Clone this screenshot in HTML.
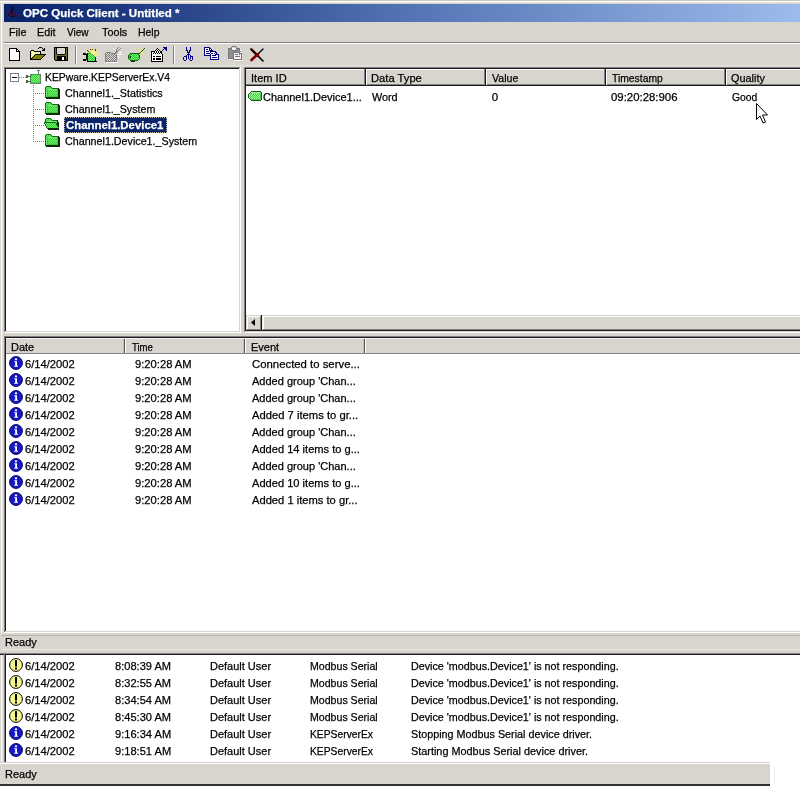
<!DOCTYPE html>
<html><head><meta charset="utf-8"><title>OPC Quick Client</title>
<style>
html,body{margin:0;padding:0}
body{width:800px;height:786px;overflow:hidden;position:relative;background:#d8d4ce;font-family:"Liberation Sans", sans-serif;font-size:11px}
.t{-webkit-text-stroke:0.25px currentColor;position:absolute;line-height:14px;white-space:pre;transform-origin:0 0}
</style></head><body>
<div style="position:absolute;left:0px;top:0px;width:800px;height:1px;background:#ccc8bc;"></div>
<div style="position:absolute;left:0px;top:1px;width:800px;height:1px;background:#fff;"></div>
<div style="position:absolute;left:1px;top:1px;width:1px;height:785px;background:#fff;"></div>
<div style="position:absolute;left:2px;top:2px;width:798px;height:1px;background:#e6e4e0;"></div>
<div style="position:absolute;left:2px;top:2px;width:1px;height:784px;background:#e0ddd8;"></div>
<div style="position:absolute;left:4px;top:4px;width:796px;height:18px;background:linear-gradient(to right,#0a246a 0%,#0c266e 3%,#5272b4 50%,#9cbcec 100%);"></div>
<div style="position:absolute;left:4px;top:42px;width:796px;height:1px;background:#808080;"></div>
<div style="position:absolute;left:4px;top:43px;width:796px;height:1px;background:#fff;"></div>
<div style="position:absolute;left:75px;top:46px;width:1px;height:18px;background:#808080;"></div>
<div style="position:absolute;left:76px;top:46px;width:1px;height:18px;background:#fff;"></div>
<div style="position:absolute;left:173px;top:46px;width:1px;height:18px;background:#808080;"></div>
<div style="position:absolute;left:174px;top:46px;width:1px;height:18px;background:#fff;"></div>
<div style="position:absolute;left:4px;top:65px;width:796px;height:1px;background:#e4e1db;"></div>
<div style="position:absolute;left:4px;top:66px;width:796px;height:1px;background:#dcd9d2;"></div>
<div style="position:absolute;left:4px;top:67px;width:237px;height:266px;background:#fff;"></div>
<div style="position:absolute;left:4px;top:67px;width:237px;height:1px;background:#808080;"></div>
<div style="position:absolute;left:4px;top:67px;width:1px;height:266px;background:#808080;"></div>
<div style="position:absolute;left:5px;top:68px;width:235px;height:1px;background:#1c1c1c;"></div>
<div style="position:absolute;left:5px;top:68px;width:1px;height:264px;background:#1c1c1c;"></div>
<div style="position:absolute;left:5px;top:331px;width:235px;height:1px;background:#d8d4ce;"></div>
<div style="position:absolute;left:239px;top:68px;width:1px;height:264px;background:#d8d4ce;"></div>
<div style="position:absolute;left:4px;top:332px;width:237px;height:1px;background:#fff;"></div>
<div style="position:absolute;left:240px;top:67px;width:1px;height:266px;background:#fff;"></div>
<div style="position:absolute;left:244px;top:67px;width:600px;height:266px;background:#fff;"></div>
<div style="position:absolute;left:244px;top:67px;width:600px;height:1px;background:#808080;"></div>
<div style="position:absolute;left:244px;top:67px;width:1px;height:266px;background:#808080;"></div>
<div style="position:absolute;left:245px;top:68px;width:598px;height:1px;background:#1c1c1c;"></div>
<div style="position:absolute;left:245px;top:68px;width:1px;height:264px;background:#1c1c1c;"></div>
<div style="position:absolute;left:245px;top:331px;width:598px;height:1px;background:#d8d4ce;"></div>
<div style="position:absolute;left:842px;top:68px;width:1px;height:264px;background:#d8d4ce;"></div>
<div style="position:absolute;left:244px;top:332px;width:600px;height:1px;background:#fff;"></div>
<div style="position:absolute;left:843px;top:67px;width:1px;height:266px;background:#fff;"></div>
<div style="position:absolute;left:4px;top:336px;width:840px;height:297px;background:#fff;"></div>
<div style="position:absolute;left:4px;top:336px;width:840px;height:1px;background:#808080;"></div>
<div style="position:absolute;left:4px;top:336px;width:1px;height:297px;background:#808080;"></div>
<div style="position:absolute;left:5px;top:337px;width:838px;height:1px;background:#1c1c1c;"></div>
<div style="position:absolute;left:5px;top:337px;width:1px;height:295px;background:#1c1c1c;"></div>
<div style="position:absolute;left:5px;top:631px;width:838px;height:1px;background:#d8d4ce;"></div>
<div style="position:absolute;left:842px;top:337px;width:1px;height:295px;background:#d8d4ce;"></div>
<div style="position:absolute;left:4px;top:632px;width:840px;height:1px;background:#fff;"></div>
<div style="position:absolute;left:843px;top:336px;width:1px;height:297px;background:#fff;"></div>
<div style="position:absolute;left:246px;top:69px;width:560px;height:17px;background:#d8d4ce;"></div>
<div style="position:absolute;left:246px;top:69px;width:560px;height:1px;background:#fff;"></div>
<div style="position:absolute;left:246px;top:85px;width:560px;height:1px;background:#1c1c1c;"></div>
<div style="position:absolute;left:246px;top:84px;width:560px;height:1px;background:#808080;"></div>
<div style="position:absolute;left:364px;top:69px;width:1px;height:16px;background:#808080;"></div>
<div style="position:absolute;left:365px;top:69px;width:1px;height:17px;background:#1c1c1c;"></div>
<div style="position:absolute;left:366px;top:69px;width:1px;height:16px;background:#fff;"></div>
<div style="position:absolute;left:484px;top:69px;width:1px;height:16px;background:#808080;"></div>
<div style="position:absolute;left:485px;top:69px;width:1px;height:17px;background:#1c1c1c;"></div>
<div style="position:absolute;left:486px;top:69px;width:1px;height:16px;background:#fff;"></div>
<div style="position:absolute;left:604px;top:69px;width:1px;height:16px;background:#808080;"></div>
<div style="position:absolute;left:605px;top:69px;width:1px;height:17px;background:#1c1c1c;"></div>
<div style="position:absolute;left:606px;top:69px;width:1px;height:16px;background:#fff;"></div>
<div style="position:absolute;left:724px;top:69px;width:1px;height:16px;background:#808080;"></div>
<div style="position:absolute;left:725px;top:69px;width:1px;height:17px;background:#1c1c1c;"></div>
<div style="position:absolute;left:726px;top:69px;width:1px;height:16px;background:#fff;"></div>
<div style="position:absolute;left:6px;top:338px;width:820px;height:16px;background:#d8d4ce;"></div>
<div style="position:absolute;left:6px;top:338px;width:820px;height:1px;background:#f4f2ee;"></div>
<div style="position:absolute;left:6px;top:353px;width:820px;height:1px;background:#858585;"></div>
<div style="position:absolute;left:123px;top:339px;width:1px;height:14px;background:#c4c0b8;"></div>
<div style="position:absolute;left:124px;top:339px;width:1px;height:14px;background:#585858;"></div>
<div style="position:absolute;left:125px;top:339px;width:1px;height:14px;background:#fff;"></div>
<div style="position:absolute;left:243px;top:339px;width:1px;height:14px;background:#c4c0b8;"></div>
<div style="position:absolute;left:244px;top:339px;width:1px;height:14px;background:#585858;"></div>
<div style="position:absolute;left:245px;top:339px;width:1px;height:14px;background:#fff;"></div>
<div style="position:absolute;left:363px;top:339px;width:1px;height:14px;background:#c4c0b8;"></div>
<div style="position:absolute;left:364px;top:339px;width:1px;height:14px;background:#585858;"></div>
<div style="position:absolute;left:365px;top:339px;width:1px;height:14px;background:#fff;"></div>
<div style="position:absolute;left:246px;top:315px;width:560px;height:16px;background:#d8d4ce;"></div>
<div style="position:absolute;left:246px;top:315px;width:560px;height:1px;background:#d0d0c8;"></div>
<div style="position:absolute;left:246px;top:316px;width:560px;height:1px;background:#fff;"></div>
<div style="position:absolute;left:246px;top:329px;width:560px;height:1px;background:#808080;"></div>
<div style="position:absolute;left:246px;top:330px;width:560px;height:1px;background:#1c1c1c;"></div>
<div style="position:absolute;left:246px;top:315px;width:1px;height:15px;background:#d8d4ce;"></div>
<div style="position:absolute;left:247px;top:316px;width:1px;height:13px;background:#fff;"></div>
<div style="position:absolute;left:261px;top:315px;width:1px;height:16px;background:#1c1c1c;"></div>
<div style="position:absolute;left:260px;top:316px;width:1px;height:14px;background:#808080;"></div>
<div style="position:absolute;left:262px;top:315px;width:1px;height:15px;background:#e8e6e2;"></div>
<div style="position:absolute;left:263px;top:316px;width:1px;height:13px;background:#fff;"></div>
<svg style="position:absolute;left:251px;top:319px" width="4" height="7" viewBox="0 0 4 7"><path d="M4 0 L4 7 L0 3.5 Z" fill="#000"/></svg>
<div style="position:absolute;left:0px;top:633px;width:800px;height:21px;background:#d8d4ce;"></div>
<div style="position:absolute;left:2px;top:635px;width:800px;height:1px;background:#b8b4ac;"></div>
<div style="position:absolute;left:2px;top:649px;width:800px;height:1px;background:#ece9e4;"></div>
<div style="position:absolute;left:0px;top:653px;width:800px;height:1px;background:#808080;"></div>
<div style="position:absolute;left:0px;top:654px;width:800px;height:1px;background:#202020;"></div>
<div style="position:absolute;left:4px;top:655px;width:800px;height:107px;background:#fff;"></div>
<div style="position:absolute;left:4px;top:654px;width:1px;height:108px;background:#808080;"></div>
<div style="position:absolute;left:5px;top:654px;width:1px;height:108px;background:#202020;"></div>
<div style="position:absolute;left:0px;top:762px;width:770px;height:1px;background:#d2d0c8;"></div>
<div style="position:absolute;left:770px;top:762px;width:40px;height:30px;background:#fff;"></div>
<div style="position:absolute;left:0px;top:763px;width:770px;height:21px;background:#d8d4ce;"></div>
<div style="position:absolute;left:0px;top:763px;width:770px;height:1px;background:#fff;"></div>
<div style="position:absolute;left:0px;top:784px;width:770px;height:2px;background:#303030;"></div>
<div style="position:absolute;left:774px;top:767px;width:1px;height:17px;background:#f0f0f0;"></div>
<div style="position:absolute;left:64px;top:117px;width:103px;height:16px;background:#0a246a;outline:1px dotted #c8b890;outline-offset:-1px"></div>
<div style="position:absolute;left:33px;top:85px;width:1px;height:57px;background:repeating-linear-gradient(to bottom,#808080 0,#808080 1px,transparent 1px,transparent 2px);"></div>
<div style="position:absolute;left:33px;top:93px;width:12px;height:1px;background:repeating-linear-gradient(to right,#808080 0,#808080 1px,transparent 1px,transparent 2px);"></div>
<div style="position:absolute;left:33px;top:109px;width:12px;height:1px;background:repeating-linear-gradient(to right,#808080 0,#808080 1px,transparent 1px,transparent 2px);"></div>
<div style="position:absolute;left:33px;top:125px;width:12px;height:1px;background:repeating-linear-gradient(to right,#808080 0,#808080 1px,transparent 1px,transparent 2px);"></div>
<div style="position:absolute;left:33px;top:141px;width:12px;height:1px;background:repeating-linear-gradient(to right,#808080 0,#808080 1px,transparent 1px,transparent 2px);"></div>
<div style="position:absolute;left:19px;top:77px;width:7px;height:1px;background:repeating-linear-gradient(to right,#808080 0,#808080 1px,transparent 1px,transparent 2px);"></div>
<svg style="position:absolute;left:9px;top:48px" width="11" height="13" viewBox="0 0 11 13" shape-rendering="crispEdges"><rect x="0" y="0" width="8" height="1" fill="#000"/><rect x="0" y="1" width="1" height="1" fill="#000"/><rect x="1" y="1" width="6" height="1" fill="#fff"/><rect x="7" y="1" width="2" height="1" fill="#000"/><rect x="0" y="2" width="1" height="1" fill="#000"/><rect x="1" y="2" width="6" height="1" fill="#fff"/><rect x="7" y="2" width="1" height="1" fill="#000"/><rect x="8" y="2" width="1" height="1" fill="#fff"/><rect x="9" y="2" width="1" height="1" fill="#000"/><rect x="0" y="3" width="1" height="1" fill="#000"/><rect x="1" y="3" width="6" height="1" fill="#fff"/><rect x="7" y="3" width="4" height="1" fill="#000"/><rect x="0" y="4" width="1" height="1" fill="#000"/><rect x="1" y="4" width="9" height="1" fill="#fff"/><rect x="10" y="4" width="1" height="1" fill="#000"/><rect x="0" y="5" width="1" height="1" fill="#000"/><rect x="1" y="5" width="9" height="1" fill="#fff"/><rect x="10" y="5" width="1" height="1" fill="#000"/><rect x="0" y="6" width="1" height="1" fill="#000"/><rect x="1" y="6" width="9" height="1" fill="#fff"/><rect x="10" y="6" width="1" height="1" fill="#000"/><rect x="0" y="7" width="1" height="1" fill="#000"/><rect x="1" y="7" width="9" height="1" fill="#fff"/><rect x="10" y="7" width="1" height="1" fill="#000"/><rect x="0" y="8" width="1" height="1" fill="#000"/><rect x="1" y="8" width="9" height="1" fill="#fff"/><rect x="10" y="8" width="1" height="1" fill="#000"/><rect x="0" y="9" width="1" height="1" fill="#000"/><rect x="1" y="9" width="9" height="1" fill="#fff"/><rect x="10" y="9" width="1" height="1" fill="#000"/><rect x="0" y="10" width="1" height="1" fill="#000"/><rect x="1" y="10" width="9" height="1" fill="#fff"/><rect x="10" y="10" width="1" height="1" fill="#000"/><rect x="0" y="11" width="1" height="1" fill="#000"/><rect x="1" y="11" width="9" height="1" fill="#fff"/><rect x="10" y="11" width="1" height="1" fill="#000"/><rect x="0" y="12" width="11" height="1" fill="#000"/></svg><svg style="position:absolute;left:30px;top:47px" width="16" height="13" viewBox="0 0 16 13" shape-rendering="crispEdges"><rect x="9" y="0" width="3" height="1" fill="#000"/><rect x="8" y="1" width="1" height="1" fill="#000"/><rect x="12" y="1" width="1" height="1" fill="#000"/><rect x="14" y="1" width="1" height="1" fill="#000"/><rect x="13" y="2" width="2" height="1" fill="#000"/><rect x="1" y="3" width="3" height="1" fill="#000"/><rect x="12" y="3" width="3" height="1" fill="#000"/><rect x="0" y="4" width="1" height="1" fill="#000"/><rect x="1" y="4" width="1" height="1" fill="#f4f080"/><rect x="2" y="4" width="1" height="1" fill="#fffff0"/><rect x="3" y="4" width="1" height="1" fill="#f4f080"/><rect x="4" y="4" width="7" height="1" fill="#000"/><rect x="0" y="5" width="1" height="1" fill="#000"/><rect x="1" y="5" width="1" height="1" fill="#fffff0"/><rect x="2" y="5" width="1" height="1" fill="#f4f080"/><rect x="3" y="5" width="1" height="1" fill="#fffff0"/><rect x="4" y="5" width="1" height="1" fill="#f4f080"/><rect x="5" y="5" width="1" height="1" fill="#fffff0"/><rect x="6" y="5" width="1" height="1" fill="#f4f080"/><rect x="7" y="5" width="1" height="1" fill="#fffff0"/><rect x="8" y="5" width="1" height="1" fill="#f4f080"/><rect x="9" y="5" width="1" height="1" fill="#fffff0"/><rect x="10" y="5" width="1" height="1" fill="#000"/><rect x="0" y="6" width="1" height="1" fill="#000"/><rect x="1" y="6" width="1" height="1" fill="#f4f080"/><rect x="2" y="6" width="1" height="1" fill="#fffff0"/><rect x="3" y="6" width="1" height="1" fill="#f4f080"/><rect x="4" y="6" width="1" height="1" fill="#fffff0"/><rect x="5" y="6" width="1" height="1" fill="#f4f080"/><rect x="6" y="6" width="1" height="1" fill="#fffff0"/><rect x="7" y="6" width="1" height="1" fill="#f4f080"/><rect x="8" y="6" width="1" height="1" fill="#fffff0"/><rect x="9" y="6" width="1" height="1" fill="#f4f080"/><rect x="10" y="6" width="1" height="1" fill="#000"/><rect x="0" y="7" width="1" height="1" fill="#000"/><rect x="1" y="7" width="1" height="1" fill="#fffff0"/><rect x="2" y="7" width="1" height="1" fill="#f4f080"/><rect x="3" y="7" width="1" height="1" fill="#fffff0"/><rect x="4" y="7" width="1" height="1" fill="#f4f080"/><rect x="5" y="7" width="11" height="1" fill="#000"/><rect x="0" y="8" width="1" height="1" fill="#000"/><rect x="1" y="8" width="1" height="1" fill="#f4f080"/><rect x="2" y="8" width="1" height="1" fill="#fffff0"/><rect x="3" y="8" width="1" height="1" fill="#f4f080"/><rect x="4" y="8" width="1" height="1" fill="#000"/><rect x="5" y="8" width="9" height="1" fill="#808000"/><rect x="14" y="8" width="1" height="1" fill="#000"/><rect x="0" y="9" width="1" height="1" fill="#000"/><rect x="1" y="9" width="1" height="1" fill="#fffff0"/><rect x="2" y="9" width="1" height="1" fill="#f4f080"/><rect x="3" y="9" width="1" height="1" fill="#000"/><rect x="4" y="9" width="9" height="1" fill="#808000"/><rect x="13" y="9" width="1" height="1" fill="#000"/><rect x="0" y="10" width="1" height="1" fill="#000"/><rect x="1" y="10" width="1" height="1" fill="#f4f080"/><rect x="2" y="10" width="1" height="1" fill="#000"/><rect x="3" y="10" width="9" height="1" fill="#808000"/><rect x="12" y="10" width="1" height="1" fill="#000"/><rect x="0" y="11" width="2" height="1" fill="#000"/><rect x="2" y="11" width="9" height="1" fill="#808000"/><rect x="11" y="11" width="1" height="1" fill="#000"/><rect x="0" y="12" width="11" height="1" fill="#000"/></svg><svg style="position:absolute;left:54px;top:47px" width="14" height="14" viewBox="0 0 14 14" shape-rendering="crispEdges"><rect x="0" y="0" width="14" height="1" fill="#000"/><rect x="0" y="1" width="1" height="1" fill="#000"/><rect x="1" y="1" width="1" height="1" fill="#707030"/><rect x="2" y="1" width="1" height="1" fill="#000"/><rect x="3" y="1" width="8" height="1" fill="#d8d8d0"/><rect x="11" y="1" width="1" height="1" fill="#000"/><rect x="12" y="1" width="1" height="1" fill="#707030"/><rect x="13" y="1" width="1" height="1" fill="#000"/><rect x="0" y="2" width="1" height="1" fill="#000"/><rect x="1" y="2" width="1" height="1" fill="#707030"/><rect x="2" y="2" width="1" height="1" fill="#000"/><rect x="3" y="2" width="8" height="1" fill="#d8d8d0"/><rect x="11" y="2" width="1" height="1" fill="#000"/><rect x="12" y="2" width="1" height="1" fill="#707030"/><rect x="13" y="2" width="1" height="1" fill="#000"/><rect x="0" y="3" width="1" height="1" fill="#000"/><rect x="1" y="3" width="1" height="1" fill="#707030"/><rect x="2" y="3" width="1" height="1" fill="#000"/><rect x="3" y="3" width="8" height="1" fill="#d8d8d0"/><rect x="11" y="3" width="1" height="1" fill="#000"/><rect x="12" y="3" width="1" height="1" fill="#707030"/><rect x="13" y="3" width="1" height="1" fill="#000"/><rect x="0" y="4" width="1" height="1" fill="#000"/><rect x="1" y="4" width="1" height="1" fill="#707030"/><rect x="2" y="4" width="1" height="1" fill="#000"/><rect x="3" y="4" width="8" height="1" fill="#d8d8d0"/><rect x="11" y="4" width="1" height="1" fill="#000"/><rect x="12" y="4" width="1" height="1" fill="#707030"/><rect x="13" y="4" width="1" height="1" fill="#000"/><rect x="0" y="5" width="1" height="1" fill="#000"/><rect x="1" y="5" width="1" height="1" fill="#707030"/><rect x="2" y="5" width="1" height="1" fill="#000"/><rect x="3" y="5" width="8" height="1" fill="#d8d8d0"/><rect x="11" y="5" width="1" height="1" fill="#000"/><rect x="12" y="5" width="1" height="1" fill="#707030"/><rect x="13" y="5" width="1" height="1" fill="#000"/><rect x="0" y="6" width="1" height="1" fill="#000"/><rect x="1" y="6" width="1" height="1" fill="#707030"/><rect x="2" y="6" width="1" height="1" fill="#000"/><rect x="3" y="6" width="8" height="1" fill="#d8d8d0"/><rect x="11" y="6" width="1" height="1" fill="#000"/><rect x="12" y="6" width="1" height="1" fill="#707030"/><rect x="13" y="6" width="1" height="1" fill="#000"/><rect x="0" y="7" width="1" height="1" fill="#000"/><rect x="1" y="7" width="2" height="1" fill="#707030"/><rect x="3" y="7" width="8" height="1" fill="#000"/><rect x="11" y="7" width="2" height="1" fill="#707030"/><rect x="13" y="7" width="1" height="1" fill="#000"/><rect x="0" y="8" width="1" height="1" fill="#000"/><rect x="1" y="8" width="12" height="1" fill="#707030"/><rect x="13" y="8" width="1" height="1" fill="#000"/><rect x="0" y="9" width="1" height="1" fill="#000"/><rect x="1" y="9" width="2" height="1" fill="#707030"/><rect x="3" y="9" width="9" height="1" fill="#000"/><rect x="12" y="9" width="1" height="1" fill="#707030"/><rect x="13" y="9" width="1" height="1" fill="#000"/><rect x="0" y="10" width="1" height="1" fill="#000"/><rect x="1" y="10" width="2" height="1" fill="#707030"/><rect x="3" y="10" width="5" height="1" fill="#000"/><rect x="8" y="10" width="2" height="1" fill="#fff"/><rect x="10" y="10" width="2" height="1" fill="#000"/><rect x="12" y="10" width="1" height="1" fill="#707030"/><rect x="13" y="10" width="1" height="1" fill="#000"/><rect x="0" y="11" width="1" height="1" fill="#000"/><rect x="1" y="11" width="2" height="1" fill="#707030"/><rect x="3" y="11" width="5" height="1" fill="#000"/><rect x="8" y="11" width="2" height="1" fill="#fff"/><rect x="10" y="11" width="2" height="1" fill="#000"/><rect x="12" y="11" width="1" height="1" fill="#707030"/><rect x="13" y="11" width="1" height="1" fill="#000"/><rect x="0" y="12" width="1" height="1" fill="#000"/><rect x="1" y="12" width="2" height="1" fill="#707030"/><rect x="3" y="12" width="5" height="1" fill="#000"/><rect x="8" y="12" width="2" height="1" fill="#fff"/><rect x="10" y="12" width="2" height="1" fill="#000"/><rect x="12" y="12" width="1" height="1" fill="#707030"/><rect x="13" y="12" width="1" height="1" fill="#000"/><rect x="1" y="13" width="13" height="1" fill="#000"/></svg><svg style="position:absolute;left:82px;top:47px" width="18" height="16" viewBox="0 0 18 16" shape-rendering="crispEdges"><rect x="7" y="1" width="1" height="1" fill="#f4ec80"/><rect x="10" y="1" width="1" height="1" fill="#f4ec80"/><rect x="14" y="1" width="1" height="1" fill="#f4ec80"/><rect x="4" y="2" width="1" height="1" fill="#f4ec80"/><rect x="8" y="2" width="1" height="1" fill="#504000"/><rect x="10" y="2" width="1" height="1" fill="#504000"/><rect x="13" y="2" width="1" height="1" fill="#504000"/><rect x="5" y="3" width="1" height="1" fill="#504000"/><rect x="8" y="3" width="4" height="1" fill="#f4ec80"/><rect x="13" y="3" width="1" height="1" fill="#504000"/><rect x="6" y="4" width="1" height="1" fill="#504000"/><rect x="7" y="4" width="6" height="1" fill="#f4ec80"/><rect x="14" y="4" width="4" height="1" fill="#f4ec80"/><rect x="7" y="5" width="1" height="1" fill="#20c820"/><rect x="8" y="5" width="2" height="1" fill="#f4ec80"/><rect x="10" y="5" width="2" height="1" fill="#ffffd0"/><rect x="12" y="5" width="2" height="1" fill="#f4ec80"/><rect x="1" y="6" width="3" height="1" fill="#000"/><rect x="5" y="6" width="1" height="1" fill="#000"/><rect x="6" y="6" width="3" height="1" fill="#20c820"/><rect x="9" y="6" width="1" height="1" fill="#f4ec80"/><rect x="10" y="6" width="2" height="1" fill="#ffffd0"/><rect x="12" y="6" width="6" height="1" fill="#f4ec80"/><rect x="1" y="7" width="5" height="1" fill="#000"/><rect x="6" y="7" width="1" height="1" fill="#20c820"/><rect x="7" y="7" width="1" height="1" fill="#90f090"/><rect x="8" y="7" width="1" height="1" fill="#20c820"/><rect x="9" y="7" width="1" height="1" fill="#90f090"/><rect x="10" y="7" width="1" height="1" fill="#20c820"/><rect x="11" y="7" width="3" height="1" fill="#f4ec80"/><rect x="4" y="8" width="2" height="1" fill="#000"/><rect x="6" y="8" width="1" height="1" fill="#90f090"/><rect x="7" y="8" width="1" height="1" fill="#20c820"/><rect x="8" y="8" width="1" height="1" fill="#90f090"/><rect x="9" y="8" width="1" height="1" fill="#20c820"/><rect x="10" y="8" width="1" height="1" fill="#90f090"/><rect x="11" y="8" width="1" height="1" fill="#20c820"/><rect x="12" y="8" width="6" height="1" fill="#f4ec80"/><rect x="4" y="9" width="2" height="1" fill="#000"/><rect x="6" y="9" width="1" height="1" fill="#20c820"/><rect x="7" y="9" width="1" height="1" fill="#90f090"/><rect x="8" y="9" width="1" height="1" fill="#20c820"/><rect x="9" y="9" width="1" height="1" fill="#90f090"/><rect x="10" y="9" width="1" height="1" fill="#20c820"/><rect x="11" y="9" width="1" height="1" fill="#90f090"/><rect x="12" y="9" width="1" height="1" fill="#20c820"/><rect x="13" y="9" width="1" height="1" fill="#f4ec80"/><rect x="4" y="10" width="2" height="1" fill="#000"/><rect x="6" y="10" width="1" height="1" fill="#90f090"/><rect x="7" y="10" width="1" height="1" fill="#20c820"/><rect x="8" y="10" width="1" height="1" fill="#90f090"/><rect x="9" y="10" width="1" height="1" fill="#20c820"/><rect x="10" y="10" width="1" height="1" fill="#90f090"/><rect x="11" y="10" width="1" height="1" fill="#20c820"/><rect x="12" y="10" width="1" height="1" fill="#90f090"/><rect x="13" y="10" width="1" height="1" fill="#000"/><rect x="4" y="11" width="2" height="1" fill="#000"/><rect x="6" y="11" width="1" height="1" fill="#20c820"/><rect x="7" y="11" width="1" height="1" fill="#90f090"/><rect x="8" y="11" width="1" height="1" fill="#20c820"/><rect x="9" y="11" width="1" height="1" fill="#90f090"/><rect x="10" y="11" width="1" height="1" fill="#20c820"/><rect x="11" y="11" width="1" height="1" fill="#90f090"/><rect x="12" y="11" width="1" height="1" fill="#20c820"/><rect x="13" y="11" width="1" height="1" fill="#000"/><rect x="1" y="12" width="5" height="1" fill="#000"/><rect x="6" y="12" width="1" height="1" fill="#90f090"/><rect x="7" y="12" width="1" height="1" fill="#20c820"/><rect x="8" y="12" width="1" height="1" fill="#90f090"/><rect x="9" y="12" width="1" height="1" fill="#20c820"/><rect x="10" y="12" width="1" height="1" fill="#90f090"/><rect x="11" y="12" width="1" height="1" fill="#20c820"/><rect x="12" y="12" width="1" height="1" fill="#90f090"/><rect x="13" y="12" width="1" height="1" fill="#000"/><rect x="1" y="13" width="3" height="1" fill="#000"/><rect x="5" y="13" width="1" height="1" fill="#000"/><rect x="6" y="13" width="1" height="1" fill="#20c820"/><rect x="7" y="13" width="1" height="1" fill="#90f090"/><rect x="8" y="13" width="1" height="1" fill="#20c820"/><rect x="9" y="13" width="1" height="1" fill="#90f090"/><rect x="10" y="13" width="1" height="1" fill="#20c820"/><rect x="11" y="13" width="1" height="1" fill="#90f090"/><rect x="12" y="13" width="1" height="1" fill="#20c820"/><rect x="13" y="13" width="1" height="1" fill="#000"/><rect x="5" y="14" width="10" height="1" fill="#000"/></svg><svg style="position:absolute;left:104px;top:47px" width="18" height="16" viewBox="0 0 18 16" shape-rendering="crispEdges"><rect x="14" y="0" width="1" height="1" fill="#808080"/><rect x="9" y="1" width="1" height="1" fill="#fff"/><rect x="13" y="1" width="1" height="1" fill="#808080"/><rect x="16" y="1" width="1" height="1" fill="#808080"/><rect x="10" y="2" width="1" height="1" fill="#fff"/><rect x="12" y="2" width="1" height="1" fill="#808080"/><rect x="15" y="2" width="1" height="1" fill="#808080"/><rect x="11" y="3" width="1" height="1" fill="#fff"/><rect x="12" y="3" width="1" height="1" fill="#808080"/><rect x="14" y="3" width="1" height="1" fill="#808080"/><rect x="12" y="4" width="2" height="1" fill="#808080"/><rect x="2" y="5" width="5" height="1" fill="#808080"/><rect x="11" y="5" width="3" height="1" fill="#808080"/><rect x="14" y="5" width="4" height="1" fill="#fff"/><rect x="1" y="6" width="1" height="1" fill="#808080"/><rect x="3" y="6" width="1" height="1" fill="#808080"/><rect x="5" y="6" width="1" height="1" fill="#808080"/><rect x="7" y="6" width="5" height="1" fill="#808080"/><rect x="1" y="7" width="2" height="1" fill="#808080"/><rect x="4" y="7" width="1" height="1" fill="#808080"/><rect x="6" y="7" width="1" height="1" fill="#808080"/><rect x="8" y="7" width="1" height="1" fill="#808080"/><rect x="10" y="7" width="1" height="1" fill="#808080"/><rect x="12" y="7" width="1" height="1" fill="#808080"/><rect x="13" y="7" width="5" height="1" fill="#fff"/><rect x="1" y="8" width="1" height="1" fill="#808080"/><rect x="3" y="8" width="1" height="1" fill="#808080"/><rect x="5" y="8" width="1" height="1" fill="#808080"/><rect x="7" y="8" width="1" height="1" fill="#808080"/><rect x="9" y="8" width="1" height="1" fill="#808080"/><rect x="11" y="8" width="2" height="1" fill="#808080"/><rect x="1" y="9" width="2" height="1" fill="#808080"/><rect x="4" y="9" width="1" height="1" fill="#808080"/><rect x="6" y="9" width="1" height="1" fill="#808080"/><rect x="8" y="9" width="1" height="1" fill="#808080"/><rect x="10" y="9" width="1" height="1" fill="#808080"/><rect x="12" y="9" width="1" height="1" fill="#808080"/><rect x="14" y="9" width="1" height="1" fill="#fff"/><rect x="1" y="10" width="1" height="1" fill="#808080"/><rect x="3" y="10" width="1" height="1" fill="#808080"/><rect x="5" y="10" width="1" height="1" fill="#808080"/><rect x="7" y="10" width="1" height="1" fill="#808080"/><rect x="9" y="10" width="1" height="1" fill="#808080"/><rect x="11" y="10" width="2" height="1" fill="#808080"/><rect x="15" y="10" width="1" height="1" fill="#fff"/><rect x="1" y="11" width="2" height="1" fill="#808080"/><rect x="4" y="11" width="1" height="1" fill="#808080"/><rect x="6" y="11" width="1" height="1" fill="#808080"/><rect x="8" y="11" width="1" height="1" fill="#808080"/><rect x="10" y="11" width="1" height="1" fill="#808080"/><rect x="12" y="11" width="1" height="1" fill="#808080"/><rect x="1" y="12" width="1" height="1" fill="#808080"/><rect x="3" y="12" width="1" height="1" fill="#808080"/><rect x="5" y="12" width="1" height="1" fill="#808080"/><rect x="7" y="12" width="1" height="1" fill="#808080"/><rect x="9" y="12" width="1" height="1" fill="#808080"/><rect x="11" y="12" width="2" height="1" fill="#808080"/><rect x="1" y="13" width="2" height="1" fill="#808080"/><rect x="4" y="13" width="1" height="1" fill="#808080"/><rect x="6" y="13" width="1" height="1" fill="#808080"/><rect x="8" y="13" width="1" height="1" fill="#808080"/><rect x="10" y="13" width="1" height="1" fill="#808080"/><rect x="12" y="13" width="1" height="1" fill="#808080"/><rect x="1" y="14" width="12" height="1" fill="#808080"/><rect x="13" y="14" width="1" height="1" fill="#fff"/><rect x="2" y="15" width="12" height="1" fill="#fff"/></svg><svg style="position:absolute;left:128px;top:48px" width="18" height="14" viewBox="0 0 18 14" shape-rendering="crispEdges"><rect x="10" y="0" width="1" height="1" fill="#f0e060"/><rect x="15" y="0" width="1" height="1" fill="#f0e060"/><rect x="16" y="0" width="1" height="1" fill="#106010"/><rect x="11" y="1" width="1" height="1" fill="#f0e060"/><rect x="14" y="1" width="1" height="1" fill="#f0e060"/><rect x="15" y="1" width="1" height="1" fill="#106010"/><rect x="12" y="2" width="2" height="1" fill="#f0e060"/><rect x="14" y="2" width="1" height="1" fill="#106010"/><rect x="13" y="3" width="1" height="1" fill="#106010"/><rect x="12" y="4" width="1" height="1" fill="#106010"/><rect x="13" y="4" width="1" height="1" fill="#ffffc0"/><rect x="14" y="4" width="4" height="1" fill="#f0e060"/><rect x="2" y="5" width="10" height="1" fill="#106010"/><rect x="12" y="5" width="2" height="1" fill="#f0e060"/><rect x="1" y="6" width="1" height="1" fill="#106010"/><rect x="2" y="6" width="2" height="1" fill="#30d030"/><rect x="4" y="6" width="1" height="1" fill="#70f070"/><rect x="5" y="6" width="1" height="1" fill="#30d030"/><rect x="6" y="6" width="1" height="1" fill="#70f070"/><rect x="7" y="6" width="1" height="1" fill="#30d030"/><rect x="8" y="6" width="1" height="1" fill="#70f070"/><rect x="9" y="6" width="1" height="1" fill="#30d030"/><rect x="10" y="6" width="1" height="1" fill="#106010"/><rect x="11" y="6" width="1" height="1" fill="#f0e060"/><rect x="14" y="6" width="1" height="1" fill="#f0e060"/><rect x="0" y="7" width="1" height="1" fill="#106010"/><rect x="1" y="7" width="2" height="1" fill="#30d030"/><rect x="3" y="7" width="1" height="1" fill="#70f070"/><rect x="4" y="7" width="1" height="1" fill="#30d030"/><rect x="5" y="7" width="1" height="1" fill="#70f070"/><rect x="6" y="7" width="1" height="1" fill="#30d030"/><rect x="7" y="7" width="1" height="1" fill="#70f070"/><rect x="8" y="7" width="1" height="1" fill="#30d030"/><rect x="9" y="7" width="1" height="1" fill="#70f070"/><rect x="10" y="7" width="1" height="1" fill="#30d030"/><rect x="11" y="7" width="1" height="1" fill="#106010"/><rect x="15" y="7" width="1" height="1" fill="#f0e060"/><rect x="0" y="8" width="1" height="1" fill="#106010"/><rect x="1" y="8" width="1" height="1" fill="#30d030"/><rect x="2" y="8" width="1" height="1" fill="#003000"/><rect x="3" y="8" width="1" height="1" fill="#30d030"/><rect x="4" y="8" width="1" height="1" fill="#70f070"/><rect x="5" y="8" width="1" height="1" fill="#30d030"/><rect x="6" y="8" width="1" height="1" fill="#70f070"/><rect x="7" y="8" width="1" height="1" fill="#30d030"/><rect x="8" y="8" width="1" height="1" fill="#70f070"/><rect x="9" y="8" width="1" height="1" fill="#30d030"/><rect x="10" y="8" width="1" height="1" fill="#70f070"/><rect x="11" y="8" width="1" height="1" fill="#106010"/><rect x="0" y="9" width="1" height="1" fill="#106010"/><rect x="1" y="9" width="1" height="1" fill="#30d030"/><rect x="2" y="9" width="1" height="1" fill="#003000"/><rect x="3" y="9" width="1" height="1" fill="#70f070"/><rect x="4" y="9" width="1" height="1" fill="#30d030"/><rect x="5" y="9" width="1" height="1" fill="#70f070"/><rect x="6" y="9" width="1" height="1" fill="#30d030"/><rect x="7" y="9" width="1" height="1" fill="#70f070"/><rect x="8" y="9" width="1" height="1" fill="#30d030"/><rect x="9" y="9" width="1" height="1" fill="#70f070"/><rect x="10" y="9" width="1" height="1" fill="#30d030"/><rect x="11" y="9" width="1" height="1" fill="#106010"/><rect x="0" y="10" width="1" height="1" fill="#106010"/><rect x="1" y="10" width="3" height="1" fill="#30d030"/><rect x="4" y="10" width="1" height="1" fill="#70f070"/><rect x="5" y="10" width="1" height="1" fill="#30d030"/><rect x="6" y="10" width="1" height="1" fill="#70f070"/><rect x="7" y="10" width="1" height="1" fill="#30d030"/><rect x="8" y="10" width="1" height="1" fill="#70f070"/><rect x="9" y="10" width="1" height="1" fill="#30d030"/><rect x="10" y="10" width="1" height="1" fill="#70f070"/><rect x="11" y="10" width="1" height="1" fill="#106010"/><rect x="1" y="11" width="1" height="1" fill="#106010"/><rect x="2" y="11" width="1" height="1" fill="#30d030"/><rect x="3" y="11" width="1" height="1" fill="#70f070"/><rect x="4" y="11" width="1" height="1" fill="#30d030"/><rect x="5" y="11" width="1" height="1" fill="#70f070"/><rect x="6" y="11" width="1" height="1" fill="#30d030"/><rect x="7" y="11" width="1" height="1" fill="#70f070"/><rect x="8" y="11" width="1" height="1" fill="#30d030"/><rect x="9" y="11" width="1" height="1" fill="#70f070"/><rect x="10" y="11" width="1" height="1" fill="#106010"/><rect x="2" y="12" width="8" height="1" fill="#106010"/><rect x="3" y="13" width="4" height="1" fill="#003000"/></svg><svg style="position:absolute;left:150px;top:47px" width="18" height="16" viewBox="0 0 18 16" shape-rendering="crispEdges"><rect x="13" y="0" width="4" height="1" fill="#000080"/><rect x="7" y="1" width="1" height="1" fill="#000"/><rect x="14" y="1" width="3" height="1" fill="#000080"/><rect x="6" y="2" width="1" height="1" fill="#000"/><rect x="7" y="2" width="1" height="1" fill="#fff"/><rect x="8" y="2" width="1" height="1" fill="#000"/><rect x="13" y="2" width="1" height="1" fill="#000080"/><rect x="15" y="2" width="2" height="1" fill="#000080"/><rect x="5" y="3" width="1" height="1" fill="#000"/><rect x="6" y="3" width="1" height="1" fill="#fff"/><rect x="7" y="3" width="1" height="1" fill="#000"/><rect x="8" y="3" width="1" height="1" fill="#fff"/><rect x="9" y="3" width="1" height="1" fill="#000"/><rect x="12" y="3" width="1" height="1" fill="#000080"/><rect x="16" y="3" width="1" height="1" fill="#000080"/><rect x="1" y="4" width="4" height="1" fill="#000"/><rect x="5" y="4" width="1" height="1" fill="#fff"/><rect x="6" y="4" width="1" height="1" fill="#000"/><rect x="7" y="4" width="1" height="1" fill="#fff"/><rect x="8" y="4" width="1" height="1" fill="#000"/><rect x="9" y="4" width="1" height="1" fill="#fff"/><rect x="10" y="4" width="1" height="1" fill="#000"/><rect x="11" y="4" width="1" height="1" fill="#000080"/><rect x="1" y="5" width="1" height="1" fill="#000"/><rect x="2" y="5" width="2" height="1" fill="#fff"/><rect x="4" y="5" width="1" height="1" fill="#000"/><rect x="5" y="5" width="1" height="1" fill="#fff"/><rect x="6" y="5" width="1" height="1" fill="#000"/><rect x="7" y="5" width="1" height="1" fill="#fff"/><rect x="8" y="5" width="1" height="1" fill="#000"/><rect x="9" y="5" width="1" height="1" fill="#fff"/><rect x="10" y="5" width="2" height="1" fill="#000"/><rect x="1" y="6" width="1" height="1" fill="#000"/><rect x="2" y="6" width="1" height="1" fill="#fff"/><rect x="3" y="6" width="1" height="1" fill="#000"/><rect x="4" y="6" width="1" height="1" fill="#fff"/><rect x="5" y="6" width="1" height="1" fill="#000"/><rect x="6" y="6" width="1" height="1" fill="#fff"/><rect x="7" y="6" width="1" height="1" fill="#000"/><rect x="8" y="6" width="1" height="1" fill="#fff"/><rect x="9" y="6" width="1" height="1" fill="#000"/><rect x="10" y="6" width="1" height="1" fill="#fff"/><rect x="11" y="6" width="1" height="1" fill="#000"/><rect x="1" y="7" width="1" height="1" fill="#000"/><rect x="2" y="7" width="10" height="1" fill="#fff"/><rect x="12" y="7" width="1" height="1" fill="#000"/><rect x="1" y="8" width="1" height="1" fill="#000"/><rect x="2" y="8" width="10" height="1" fill="#fff"/><rect x="12" y="8" width="1" height="1" fill="#000"/><rect x="1" y="9" width="1" height="1" fill="#000"/><rect x="2" y="9" width="1" height="1" fill="#fff"/><rect x="3" y="9" width="2" height="1" fill="#000"/><rect x="5" y="9" width="1" height="1" fill="#fff"/><rect x="6" y="9" width="5" height="1" fill="#000"/><rect x="11" y="9" width="1" height="1" fill="#fff"/><rect x="12" y="9" width="1" height="1" fill="#000"/><rect x="1" y="10" width="1" height="1" fill="#000"/><rect x="2" y="10" width="10" height="1" fill="#fff"/><rect x="12" y="10" width="1" height="1" fill="#000"/><rect x="1" y="11" width="1" height="1" fill="#000"/><rect x="2" y="11" width="1" height="1" fill="#fff"/><rect x="3" y="11" width="2" height="1" fill="#000"/><rect x="5" y="11" width="1" height="1" fill="#fff"/><rect x="6" y="11" width="5" height="1" fill="#000"/><rect x="11" y="11" width="1" height="1" fill="#fff"/><rect x="12" y="11" width="1" height="1" fill="#000"/><rect x="1" y="12" width="1" height="1" fill="#000"/><rect x="2" y="12" width="1" height="1" fill="#fff"/><rect x="3" y="12" width="2" height="1" fill="#000"/><rect x="5" y="12" width="1" height="1" fill="#fff"/><rect x="6" y="12" width="5" height="1" fill="#000"/><rect x="11" y="12" width="1" height="1" fill="#fff"/><rect x="12" y="12" width="1" height="1" fill="#000"/><rect x="1" y="13" width="1" height="1" fill="#000"/><rect x="2" y="13" width="10" height="1" fill="#fff"/><rect x="12" y="13" width="1" height="1" fill="#000"/><rect x="1" y="14" width="12" height="1" fill="#000"/></svg><svg style="position:absolute;left:183px;top:47px" width="10" height="14" viewBox="0 0 10 14" shape-rendering="crispEdges"><rect x="3" y="0" width="1" height="1" fill="#000080"/><rect x="7" y="0" width="1" height="1" fill="#000080"/><rect x="3" y="1" width="1" height="1" fill="#000080"/><rect x="7" y="1" width="1" height="1" fill="#000080"/><rect x="3" y="2" width="1" height="1" fill="#000080"/><rect x="7" y="2" width="1" height="1" fill="#000080"/><rect x="3" y="3" width="2" height="1" fill="#000080"/><rect x="6" y="3" width="2" height="1" fill="#000080"/><rect x="4" y="4" width="1" height="1" fill="#000080"/><rect x="6" y="4" width="1" height="1" fill="#000080"/><rect x="4" y="5" width="3" height="1" fill="#000080"/><rect x="5" y="6" width="1" height="1" fill="#000080"/><rect x="4" y="7" width="3" height="1" fill="#000080"/><rect x="3" y="8" width="1" height="1" fill="#000080"/><rect x="5" y="8" width="1" height="1" fill="#000080"/><rect x="7" y="8" width="1" height="1" fill="#000080"/><rect x="1" y="9" width="3" height="1" fill="#000080"/><rect x="5" y="9" width="1" height="1" fill="#000080"/><rect x="7" y="9" width="3" height="1" fill="#000080"/><rect x="0" y="10" width="1" height="1" fill="#000080"/><rect x="3" y="10" width="1" height="1" fill="#000080"/><rect x="5" y="10" width="1" height="1" fill="#000080"/><rect x="7" y="10" width="1" height="1" fill="#000080"/><rect x="9" y="10" width="1" height="1" fill="#000080"/><rect x="0" y="11" width="1" height="1" fill="#000080"/><rect x="3" y="11" width="1" height="1" fill="#000080"/><rect x="5" y="11" width="1" height="1" fill="#000080"/><rect x="7" y="11" width="1" height="1" fill="#000080"/><rect x="9" y="11" width="1" height="1" fill="#000080"/><rect x="0" y="12" width="1" height="1" fill="#000080"/><rect x="3" y="12" width="1" height="1" fill="#000080"/><rect x="6" y="12" width="1" height="1" fill="#000080"/><rect x="9" y="12" width="1" height="1" fill="#000080"/><rect x="1" y="13" width="2" height="1" fill="#000080"/><rect x="7" y="13" width="2" height="1" fill="#000080"/></svg><svg style="position:absolute;left:204px;top:47px" width="16" height="13" viewBox="0 0 16 13" shape-rendering="crispEdges"><rect x="0" y="0" width="6" height="1" fill="#000080"/><rect x="0" y="1" width="1" height="1" fill="#000080"/><rect x="1" y="1" width="4" height="1" fill="#fff"/><rect x="5" y="1" width="2" height="1" fill="#000080"/><rect x="0" y="2" width="1" height="1" fill="#000080"/><rect x="1" y="2" width="1" height="1" fill="#fff"/><rect x="2" y="2" width="2" height="1" fill="#000080"/><rect x="4" y="2" width="1" height="1" fill="#fff"/><rect x="5" y="2" width="1" height="1" fill="#000080"/><rect x="6" y="2" width="1" height="1" fill="#fff"/><rect x="7" y="2" width="1" height="1" fill="#000080"/><rect x="0" y="3" width="1" height="1" fill="#000080"/><rect x="1" y="3" width="4" height="1" fill="#fff"/><rect x="5" y="3" width="4" height="1" fill="#000080"/><rect x="0" y="4" width="1" height="1" fill="#000080"/><rect x="1" y="4" width="1" height="1" fill="#fff"/><rect x="2" y="4" width="3" height="1" fill="#000080"/><rect x="5" y="4" width="1" height="1" fill="#fff"/><rect x="6" y="4" width="6" height="1" fill="#000080"/><rect x="0" y="5" width="1" height="1" fill="#000080"/><rect x="1" y="5" width="5" height="1" fill="#fff"/><rect x="6" y="5" width="1" height="1" fill="#000080"/><rect x="7" y="5" width="4" height="1" fill="#fff"/><rect x="11" y="5" width="2" height="1" fill="#000080"/><rect x="0" y="6" width="1" height="1" fill="#000080"/><rect x="1" y="6" width="1" height="1" fill="#fff"/><rect x="2" y="6" width="4" height="1" fill="#000080"/><rect x="6" y="6" width="1" height="1" fill="#fff"/><rect x="7" y="6" width="2" height="1" fill="#000080"/><rect x="9" y="6" width="1" height="1" fill="#fff"/><rect x="10" y="6" width="1" height="1" fill="#000080"/><rect x="11" y="6" width="1" height="1" fill="#fff"/><rect x="12" y="6" width="1" height="1" fill="#000080"/><rect x="0" y="7" width="1" height="1" fill="#000080"/><rect x="1" y="7" width="5" height="1" fill="#fff"/><rect x="6" y="7" width="1" height="1" fill="#000080"/><rect x="7" y="7" width="4" height="1" fill="#fff"/><rect x="11" y="7" width="4" height="1" fill="#000080"/><rect x="0" y="8" width="7" height="1" fill="#000080"/><rect x="7" y="8" width="1" height="1" fill="#fff"/><rect x="8" y="8" width="4" height="1" fill="#000080"/><rect x="12" y="8" width="2" height="1" fill="#fff"/><rect x="14" y="8" width="1" height="1" fill="#000080"/><rect x="6" y="9" width="1" height="1" fill="#000080"/><rect x="7" y="9" width="7" height="1" fill="#fff"/><rect x="14" y="9" width="1" height="1" fill="#000080"/><rect x="6" y="10" width="1" height="1" fill="#000080"/><rect x="7" y="10" width="1" height="1" fill="#fff"/><rect x="8" y="10" width="5" height="1" fill="#000080"/><rect x="13" y="10" width="1" height="1" fill="#fff"/><rect x="14" y="10" width="1" height="1" fill="#000080"/><rect x="6" y="11" width="1" height="1" fill="#000080"/><rect x="7" y="11" width="7" height="1" fill="#fff"/><rect x="14" y="11" width="1" height="1" fill="#000080"/><rect x="6" y="12" width="9" height="1" fill="#000080"/></svg><svg style="position:absolute;left:227px;top:46px" width="16" height="15" viewBox="0 0 16 15" shape-rendering="crispEdges"><rect x="5" y="0" width="4" height="1" fill="#787878"/><rect x="4" y="1" width="1" height="1" fill="#787878"/><rect x="9" y="1" width="1" height="1" fill="#787878"/><rect x="1" y="2" width="4" height="1" fill="#787878"/><rect x="5" y="2" width="4" height="1" fill="#f4f4f4"/><rect x="9" y="2" width="4" height="1" fill="#787878"/><rect x="1" y="3" width="1" height="1" fill="#787878"/><rect x="2" y="3" width="1" height="1" fill="#8e8e8e"/><rect x="3" y="3" width="2" height="1" fill="#787878"/><rect x="5" y="3" width="4" height="1" fill="#f4f4f4"/><rect x="9" y="3" width="2" height="1" fill="#787878"/><rect x="11" y="3" width="1" height="1" fill="#8e8e8e"/><rect x="12" y="3" width="1" height="1" fill="#787878"/><rect x="13" y="3" width="1" height="1" fill="#f4f4f4"/><rect x="1" y="4" width="1" height="1" fill="#787878"/><rect x="2" y="4" width="3" height="1" fill="#8e8e8e"/><rect x="5" y="4" width="4" height="1" fill="#787878"/><rect x="9" y="4" width="3" height="1" fill="#8e8e8e"/><rect x="12" y="4" width="1" height="1" fill="#787878"/><rect x="13" y="4" width="1" height="1" fill="#f4f4f4"/><rect x="1" y="5" width="1" height="1" fill="#787878"/><rect x="2" y="5" width="11" height="1" fill="#8e8e8e"/><rect x="13" y="5" width="1" height="1" fill="#787878"/><rect x="14" y="5" width="1" height="1" fill="#f4f4f4"/><rect x="1" y="6" width="1" height="1" fill="#787878"/><rect x="2" y="6" width="4" height="1" fill="#8e8e8e"/><rect x="6" y="6" width="7" height="1" fill="#787878"/><rect x="13" y="6" width="1" height="1" fill="#f4f4f4"/><rect x="1" y="7" width="1" height="1" fill="#787878"/><rect x="2" y="7" width="4" height="1" fill="#8e8e8e"/><rect x="6" y="7" width="1" height="1" fill="#787878"/><rect x="7" y="7" width="5" height="1" fill="#f4f4f4"/><rect x="12" y="7" width="3" height="1" fill="#787878"/><rect x="1" y="8" width="1" height="1" fill="#787878"/><rect x="2" y="8" width="4" height="1" fill="#8e8e8e"/><rect x="6" y="8" width="1" height="1" fill="#787878"/><rect x="7" y="8" width="1" height="1" fill="#f4f4f4"/><rect x="8" y="8" width="3" height="1" fill="#787878"/><rect x="11" y="8" width="1" height="1" fill="#f4f4f4"/><rect x="12" y="8" width="1" height="1" fill="#787878"/><rect x="13" y="8" width="1" height="1" fill="#f4f4f4"/><rect x="14" y="8" width="1" height="1" fill="#787878"/><rect x="1" y="9" width="1" height="1" fill="#787878"/><rect x="2" y="9" width="4" height="1" fill="#8e8e8e"/><rect x="6" y="9" width="1" height="1" fill="#787878"/><rect x="7" y="9" width="7" height="1" fill="#f4f4f4"/><rect x="14" y="9" width="1" height="1" fill="#787878"/><rect x="1" y="10" width="1" height="1" fill="#787878"/><rect x="2" y="10" width="4" height="1" fill="#8e8e8e"/><rect x="6" y="10" width="1" height="1" fill="#787878"/><rect x="7" y="10" width="1" height="1" fill="#f4f4f4"/><rect x="8" y="10" width="5" height="1" fill="#787878"/><rect x="13" y="10" width="1" height="1" fill="#f4f4f4"/><rect x="14" y="10" width="1" height="1" fill="#787878"/><rect x="1" y="11" width="1" height="1" fill="#787878"/><rect x="2" y="11" width="4" height="1" fill="#8e8e8e"/><rect x="6" y="11" width="1" height="1" fill="#787878"/><rect x="7" y="11" width="7" height="1" fill="#f4f4f4"/><rect x="14" y="11" width="1" height="1" fill="#787878"/><rect x="1" y="12" width="6" height="1" fill="#787878"/><rect x="7" y="12" width="7" height="1" fill="#f4f4f4"/><rect x="14" y="12" width="1" height="1" fill="#787878"/><rect x="2" y="13" width="4" height="1" fill="#f4f4f4"/><rect x="6" y="13" width="9" height="1" fill="#787878"/><rect x="7" y="14" width="9" height="1" fill="#f4f4f4"/></svg><svg style="position:absolute;left:249px;top:47px" width="16" height="16" viewBox="0 0 16 16"><path d="M2 2 L14 14" stroke="#000" stroke-width="1.6" stroke-linecap="round"/><path d="M2.5 2.5 L9 9" stroke="#300000" stroke-width="2.4" stroke-linecap="round"/><path d="M14 2 L8 8" stroke="#000" stroke-width="1.4" stroke-linecap="round"/><path d="M9 7 L2.5 13" stroke="#800000" stroke-width="2.6" stroke-linecap="round"/></svg><svg style="position:absolute;left:7px;top:6px" width="12" height="13" viewBox="0 0 12 13" shape-rendering="crispEdges"><rect x="4" y="0" width="1" height="1" fill="#050c38"/><rect x="3" y="1" width="3" height="1" fill="#050c38"/><rect x="4" y="2" width="1" height="1" fill="#050c38"/><rect x="6" y="2" width="1" height="1" fill="#050c38"/><rect x="4" y="3" width="3" height="1" fill="#050c38"/><rect x="3" y="4" width="1" height="1" fill="#451040"/><rect x="4" y="4" width="2" height="1" fill="#050c38"/><rect x="2" y="5" width="2" height="1" fill="#451040"/><rect x="4" y="5" width="1" height="1" fill="#050c38"/><rect x="5" y="5" width="1" height="1" fill="#451040"/><rect x="6" y="5" width="1" height="1" fill="#050c38"/><rect x="1" y="6" width="2" height="1" fill="#451040"/><rect x="3" y="6" width="2" height="1" fill="#050c38"/><rect x="5" y="6" width="2" height="1" fill="#451040"/><rect x="7" y="6" width="1" height="1" fill="#050c38"/><rect x="0" y="7" width="2" height="1" fill="#451040"/><rect x="2" y="7" width="1" height="1" fill="#050c38"/><rect x="3" y="7" width="1" height="1" fill="#451040"/><rect x="4" y="7" width="2" height="1" fill="#050c38"/><rect x="6" y="7" width="1" height="1" fill="#451040"/><rect x="7" y="7" width="1" height="1" fill="#050c38"/><rect x="8" y="7" width="1" height="1" fill="#451040"/><rect x="0" y="8" width="1" height="1" fill="#451040"/><rect x="1" y="8" width="1" height="1" fill="#050c38"/><rect x="2" y="8" width="2" height="1" fill="#451040"/><rect x="4" y="8" width="1" height="1" fill="#050c38"/><rect x="5" y="8" width="5" height="1" fill="#451040"/><rect x="1" y="9" width="1" height="1" fill="#050c38"/><rect x="2" y="9" width="3" height="1" fill="#451040"/><rect x="5" y="9" width="1" height="1" fill="#050c38"/><rect x="6" y="9" width="2" height="1" fill="#451040"/><rect x="8" y="9" width="1" height="1" fill="#050c38"/><rect x="9" y="9" width="2" height="1" fill="#451040"/><rect x="2" y="10" width="2" height="1" fill="#451040"/><rect x="4" y="10" width="4" height="1" fill="#050c38"/><rect x="8" y="10" width="3" height="1" fill="#451040"/><rect x="10" y="11" width="1" height="1" fill="#050c38"/></svg><div style="position:absolute;left:10px;top:73px;width:7px;height:7px;border:1px solid #808080;background:#fff"></div><div style="position:absolute;left:12px;top:77px;width:5px;height:1px;background:#000"></div><svg style="position:absolute;left:25px;top:70px" width="16" height="14" viewBox="0 0 16 14" shape-rendering="crispEdges"><rect x="12" y="0" width="3" height="1" fill="#708070"/><rect x="13" y="1" width="1" height="1" fill="#708070"/><rect x="13" y="2" width="1" height="1" fill="#708070"/><rect x="13" y="3" width="1" height="1" fill="#708070"/><rect x="5" y="4" width="10" height="1" fill="#40a040"/><rect x="15" y="4" width="1" height="1" fill="#708070"/><rect x="1" y="5" width="2" height="1" fill="#586058"/><rect x="5" y="5" width="1" height="1" fill="#40a040"/><rect x="6" y="5" width="1" height="1" fill="#38d838"/><rect x="7" y="5" width="1" height="1" fill="#78f078"/><rect x="8" y="5" width="1" height="1" fill="#38d838"/><rect x="9" y="5" width="1" height="1" fill="#78f078"/><rect x="10" y="5" width="1" height="1" fill="#38d838"/><rect x="11" y="5" width="1" height="1" fill="#78f078"/><rect x="12" y="5" width="1" height="1" fill="#38d838"/><rect x="13" y="5" width="1" height="1" fill="#78f078"/><rect x="14" y="5" width="1" height="1" fill="#38d838"/><rect x="15" y="5" width="1" height="1" fill="#708070"/><rect x="1" y="6" width="5" height="1" fill="#586058"/><rect x="6" y="6" width="2" height="1" fill="#38d838"/><rect x="8" y="6" width="1" height="1" fill="#78f078"/><rect x="9" y="6" width="1" height="1" fill="#38d838"/><rect x="10" y="6" width="1" height="1" fill="#78f078"/><rect x="11" y="6" width="1" height="1" fill="#38d838"/><rect x="12" y="6" width="1" height="1" fill="#78f078"/><rect x="13" y="6" width="1" height="1" fill="#38d838"/><rect x="14" y="6" width="1" height="1" fill="#78f078"/><rect x="15" y="6" width="1" height="1" fill="#708070"/><rect x="1" y="7" width="2" height="1" fill="#586058"/><rect x="5" y="7" width="1" height="1" fill="#40a040"/><rect x="6" y="7" width="1" height="1" fill="#38d838"/><rect x="7" y="7" width="1" height="1" fill="#78f078"/><rect x="8" y="7" width="1" height="1" fill="#38d838"/><rect x="9" y="7" width="1" height="1" fill="#78f078"/><rect x="10" y="7" width="1" height="1" fill="#38d838"/><rect x="11" y="7" width="1" height="1" fill="#78f078"/><rect x="12" y="7" width="1" height="1" fill="#38d838"/><rect x="13" y="7" width="1" height="1" fill="#78f078"/><rect x="14" y="7" width="1" height="1" fill="#38d838"/><rect x="15" y="7" width="1" height="1" fill="#708070"/><rect x="5" y="8" width="1" height="1" fill="#40a040"/><rect x="6" y="8" width="1" height="1" fill="#78f078"/><rect x="7" y="8" width="1" height="1" fill="#38d838"/><rect x="8" y="8" width="1" height="1" fill="#78f078"/><rect x="9" y="8" width="1" height="1" fill="#38d838"/><rect x="10" y="8" width="1" height="1" fill="#78f078"/><rect x="11" y="8" width="1" height="1" fill="#38d838"/><rect x="12" y="8" width="1" height="1" fill="#78f078"/><rect x="13" y="8" width="1" height="1" fill="#38d838"/><rect x="14" y="8" width="1" height="1" fill="#78f078"/><rect x="15" y="8" width="1" height="1" fill="#708070"/><rect x="5" y="9" width="1" height="1" fill="#40a040"/><rect x="6" y="9" width="1" height="1" fill="#38d838"/><rect x="7" y="9" width="1" height="1" fill="#78f078"/><rect x="8" y="9" width="1" height="1" fill="#38d838"/><rect x="9" y="9" width="1" height="1" fill="#78f078"/><rect x="10" y="9" width="1" height="1" fill="#38d838"/><rect x="11" y="9" width="1" height="1" fill="#78f078"/><rect x="12" y="9" width="1" height="1" fill="#38d838"/><rect x="13" y="9" width="1" height="1" fill="#78f078"/><rect x="14" y="9" width="1" height="1" fill="#38d838"/><rect x="15" y="9" width="1" height="1" fill="#708070"/><rect x="1" y="10" width="2" height="1" fill="#586058"/><rect x="5" y="10" width="1" height="1" fill="#40a040"/><rect x="6" y="10" width="1" height="1" fill="#78f078"/><rect x="7" y="10" width="1" height="1" fill="#38d838"/><rect x="8" y="10" width="1" height="1" fill="#78f078"/><rect x="9" y="10" width="1" height="1" fill="#38d838"/><rect x="10" y="10" width="1" height="1" fill="#78f078"/><rect x="11" y="10" width="1" height="1" fill="#38d838"/><rect x="12" y="10" width="1" height="1" fill="#78f078"/><rect x="13" y="10" width="1" height="1" fill="#38d838"/><rect x="14" y="10" width="1" height="1" fill="#78f078"/><rect x="15" y="10" width="1" height="1" fill="#708070"/><rect x="1" y="11" width="5" height="1" fill="#586058"/><rect x="6" y="11" width="1" height="1" fill="#38d838"/><rect x="7" y="11" width="1" height="1" fill="#78f078"/><rect x="8" y="11" width="1" height="1" fill="#38d838"/><rect x="9" y="11" width="1" height="1" fill="#78f078"/><rect x="10" y="11" width="1" height="1" fill="#38d838"/><rect x="11" y="11" width="1" height="1" fill="#78f078"/><rect x="12" y="11" width="1" height="1" fill="#38d838"/><rect x="13" y="11" width="1" height="1" fill="#78f078"/><rect x="14" y="11" width="1" height="1" fill="#38d838"/><rect x="15" y="11" width="1" height="1" fill="#708070"/><rect x="1" y="12" width="2" height="1" fill="#586058"/><rect x="5" y="12" width="1" height="1" fill="#40a040"/><rect x="6" y="12" width="9" height="1" fill="#38d838"/><rect x="15" y="12" width="1" height="1" fill="#708070"/><rect x="5" y="13" width="11" height="1" fill="#708070"/></svg><svg style="position:absolute;left:45px;top:86px" width="15" height="13" viewBox="0 0 15 13" shape-rendering="crispEdges"><rect x="1" y="0" width="5" height="1" fill="#206020"/><rect x="0" y="1" width="1" height="1" fill="#206020"/><rect x="1" y="1" width="1" height="1" fill="#30d030"/><rect x="2" y="1" width="1" height="1" fill="#70f070"/><rect x="3" y="1" width="1" height="1" fill="#30d030"/><rect x="4" y="1" width="1" height="1" fill="#70f070"/><rect x="5" y="1" width="1" height="1" fill="#30d030"/><rect x="6" y="1" width="1" height="1" fill="#206020"/><rect x="0" y="2" width="1" height="1" fill="#206020"/><rect x="1" y="2" width="1" height="1" fill="#70f070"/><rect x="2" y="2" width="1" height="1" fill="#30d030"/><rect x="3" y="2" width="1" height="1" fill="#70f070"/><rect x="4" y="2" width="1" height="1" fill="#30d030"/><rect x="5" y="2" width="1" height="1" fill="#70f070"/><rect x="6" y="2" width="1" height="1" fill="#30d030"/><rect x="7" y="2" width="6" height="1" fill="#206020"/><rect x="13" y="2" width="1" height="1" fill="#102810"/><rect x="0" y="3" width="1" height="1" fill="#206020"/><rect x="1" y="3" width="1" height="1" fill="#30d030"/><rect x="2" y="3" width="10" height="1" fill="#70f070"/><rect x="12" y="3" width="1" height="1" fill="#30d030"/><rect x="13" y="3" width="2" height="1" fill="#102810"/><rect x="0" y="4" width="1" height="1" fill="#206020"/><rect x="1" y="4" width="1" height="1" fill="#70f070"/><rect x="2" y="4" width="2" height="1" fill="#30d030"/><rect x="4" y="4" width="1" height="1" fill="#70f070"/><rect x="5" y="4" width="1" height="1" fill="#30d030"/><rect x="6" y="4" width="1" height="1" fill="#70f070"/><rect x="7" y="4" width="1" height="1" fill="#30d030"/><rect x="8" y="4" width="1" height="1" fill="#70f070"/><rect x="9" y="4" width="1" height="1" fill="#30d030"/><rect x="10" y="4" width="1" height="1" fill="#70f070"/><rect x="11" y="4" width="2" height="1" fill="#30d030"/><rect x="13" y="4" width="2" height="1" fill="#102810"/><rect x="0" y="5" width="1" height="1" fill="#206020"/><rect x="1" y="5" width="1" height="1" fill="#70f070"/><rect x="2" y="5" width="1" height="1" fill="#30d030"/><rect x="3" y="5" width="1" height="1" fill="#70f070"/><rect x="4" y="5" width="1" height="1" fill="#30d030"/><rect x="5" y="5" width="1" height="1" fill="#70f070"/><rect x="6" y="5" width="1" height="1" fill="#30d030"/><rect x="7" y="5" width="1" height="1" fill="#70f070"/><rect x="8" y="5" width="1" height="1" fill="#30d030"/><rect x="9" y="5" width="1" height="1" fill="#70f070"/><rect x="10" y="5" width="1" height="1" fill="#30d030"/><rect x="11" y="5" width="1" height="1" fill="#70f070"/><rect x="12" y="5" width="1" height="1" fill="#30d030"/><rect x="13" y="5" width="2" height="1" fill="#102810"/><rect x="0" y="6" width="1" height="1" fill="#206020"/><rect x="1" y="6" width="1" height="1" fill="#70f070"/><rect x="2" y="6" width="2" height="1" fill="#30d030"/><rect x="4" y="6" width="1" height="1" fill="#70f070"/><rect x="5" y="6" width="1" height="1" fill="#30d030"/><rect x="6" y="6" width="1" height="1" fill="#70f070"/><rect x="7" y="6" width="1" height="1" fill="#30d030"/><rect x="8" y="6" width="1" height="1" fill="#70f070"/><rect x="9" y="6" width="1" height="1" fill="#30d030"/><rect x="10" y="6" width="1" height="1" fill="#70f070"/><rect x="11" y="6" width="2" height="1" fill="#30d030"/><rect x="13" y="6" width="2" height="1" fill="#102810"/><rect x="0" y="7" width="1" height="1" fill="#206020"/><rect x="1" y="7" width="1" height="1" fill="#70f070"/><rect x="2" y="7" width="1" height="1" fill="#30d030"/><rect x="3" y="7" width="1" height="1" fill="#70f070"/><rect x="4" y="7" width="1" height="1" fill="#30d030"/><rect x="5" y="7" width="1" height="1" fill="#70f070"/><rect x="6" y="7" width="1" height="1" fill="#30d030"/><rect x="7" y="7" width="1" height="1" fill="#70f070"/><rect x="8" y="7" width="1" height="1" fill="#30d030"/><rect x="9" y="7" width="1" height="1" fill="#70f070"/><rect x="10" y="7" width="1" height="1" fill="#30d030"/><rect x="11" y="7" width="1" height="1" fill="#70f070"/><rect x="12" y="7" width="1" height="1" fill="#30d030"/><rect x="13" y="7" width="2" height="1" fill="#102810"/><rect x="0" y="8" width="1" height="1" fill="#206020"/><rect x="1" y="8" width="1" height="1" fill="#70f070"/><rect x="2" y="8" width="2" height="1" fill="#30d030"/><rect x="4" y="8" width="1" height="1" fill="#70f070"/><rect x="5" y="8" width="1" height="1" fill="#30d030"/><rect x="6" y="8" width="1" height="1" fill="#70f070"/><rect x="7" y="8" width="1" height="1" fill="#30d030"/><rect x="8" y="8" width="1" height="1" fill="#70f070"/><rect x="9" y="8" width="1" height="1" fill="#30d030"/><rect x="10" y="8" width="1" height="1" fill="#70f070"/><rect x="11" y="8" width="2" height="1" fill="#30d030"/><rect x="13" y="8" width="2" height="1" fill="#102810"/><rect x="0" y="9" width="1" height="1" fill="#206020"/><rect x="1" y="9" width="1" height="1" fill="#70f070"/><rect x="2" y="9" width="1" height="1" fill="#30d030"/><rect x="3" y="9" width="1" height="1" fill="#70f070"/><rect x="4" y="9" width="1" height="1" fill="#30d030"/><rect x="5" y="9" width="1" height="1" fill="#70f070"/><rect x="6" y="9" width="1" height="1" fill="#30d030"/><rect x="7" y="9" width="1" height="1" fill="#70f070"/><rect x="8" y="9" width="1" height="1" fill="#30d030"/><rect x="9" y="9" width="1" height="1" fill="#70f070"/><rect x="10" y="9" width="1" height="1" fill="#30d030"/><rect x="11" y="9" width="1" height="1" fill="#70f070"/><rect x="12" y="9" width="1" height="1" fill="#30d030"/><rect x="13" y="9" width="2" height="1" fill="#102810"/><rect x="0" y="10" width="1" height="1" fill="#206020"/><rect x="1" y="10" width="1" height="1" fill="#70f070"/><rect x="2" y="10" width="11" height="1" fill="#30d030"/><rect x="13" y="10" width="2" height="1" fill="#102810"/><rect x="0" y="11" width="1" height="1" fill="#206020"/><rect x="1" y="11" width="14" height="1" fill="#102810"/><rect x="1" y="12" width="14" height="1" fill="#102810"/></svg><svg style="position:absolute;left:45px;top:102px" width="15" height="13" viewBox="0 0 15 13" shape-rendering="crispEdges"><rect x="1" y="0" width="5" height="1" fill="#206020"/><rect x="0" y="1" width="1" height="1" fill="#206020"/><rect x="1" y="1" width="1" height="1" fill="#30d030"/><rect x="2" y="1" width="1" height="1" fill="#70f070"/><rect x="3" y="1" width="1" height="1" fill="#30d030"/><rect x="4" y="1" width="1" height="1" fill="#70f070"/><rect x="5" y="1" width="1" height="1" fill="#30d030"/><rect x="6" y="1" width="1" height="1" fill="#206020"/><rect x="0" y="2" width="1" height="1" fill="#206020"/><rect x="1" y="2" width="1" height="1" fill="#70f070"/><rect x="2" y="2" width="1" height="1" fill="#30d030"/><rect x="3" y="2" width="1" height="1" fill="#70f070"/><rect x="4" y="2" width="1" height="1" fill="#30d030"/><rect x="5" y="2" width="1" height="1" fill="#70f070"/><rect x="6" y="2" width="1" height="1" fill="#30d030"/><rect x="7" y="2" width="6" height="1" fill="#206020"/><rect x="13" y="2" width="1" height="1" fill="#102810"/><rect x="0" y="3" width="1" height="1" fill="#206020"/><rect x="1" y="3" width="1" height="1" fill="#30d030"/><rect x="2" y="3" width="10" height="1" fill="#70f070"/><rect x="12" y="3" width="1" height="1" fill="#30d030"/><rect x="13" y="3" width="2" height="1" fill="#102810"/><rect x="0" y="4" width="1" height="1" fill="#206020"/><rect x="1" y="4" width="1" height="1" fill="#70f070"/><rect x="2" y="4" width="2" height="1" fill="#30d030"/><rect x="4" y="4" width="1" height="1" fill="#70f070"/><rect x="5" y="4" width="1" height="1" fill="#30d030"/><rect x="6" y="4" width="1" height="1" fill="#70f070"/><rect x="7" y="4" width="1" height="1" fill="#30d030"/><rect x="8" y="4" width="1" height="1" fill="#70f070"/><rect x="9" y="4" width="1" height="1" fill="#30d030"/><rect x="10" y="4" width="1" height="1" fill="#70f070"/><rect x="11" y="4" width="2" height="1" fill="#30d030"/><rect x="13" y="4" width="2" height="1" fill="#102810"/><rect x="0" y="5" width="1" height="1" fill="#206020"/><rect x="1" y="5" width="1" height="1" fill="#70f070"/><rect x="2" y="5" width="1" height="1" fill="#30d030"/><rect x="3" y="5" width="1" height="1" fill="#70f070"/><rect x="4" y="5" width="1" height="1" fill="#30d030"/><rect x="5" y="5" width="1" height="1" fill="#70f070"/><rect x="6" y="5" width="1" height="1" fill="#30d030"/><rect x="7" y="5" width="1" height="1" fill="#70f070"/><rect x="8" y="5" width="1" height="1" fill="#30d030"/><rect x="9" y="5" width="1" height="1" fill="#70f070"/><rect x="10" y="5" width="1" height="1" fill="#30d030"/><rect x="11" y="5" width="1" height="1" fill="#70f070"/><rect x="12" y="5" width="1" height="1" fill="#30d030"/><rect x="13" y="5" width="2" height="1" fill="#102810"/><rect x="0" y="6" width="1" height="1" fill="#206020"/><rect x="1" y="6" width="1" height="1" fill="#70f070"/><rect x="2" y="6" width="2" height="1" fill="#30d030"/><rect x="4" y="6" width="1" height="1" fill="#70f070"/><rect x="5" y="6" width="1" height="1" fill="#30d030"/><rect x="6" y="6" width="1" height="1" fill="#70f070"/><rect x="7" y="6" width="1" height="1" fill="#30d030"/><rect x="8" y="6" width="1" height="1" fill="#70f070"/><rect x="9" y="6" width="1" height="1" fill="#30d030"/><rect x="10" y="6" width="1" height="1" fill="#70f070"/><rect x="11" y="6" width="2" height="1" fill="#30d030"/><rect x="13" y="6" width="2" height="1" fill="#102810"/><rect x="0" y="7" width="1" height="1" fill="#206020"/><rect x="1" y="7" width="1" height="1" fill="#70f070"/><rect x="2" y="7" width="1" height="1" fill="#30d030"/><rect x="3" y="7" width="1" height="1" fill="#70f070"/><rect x="4" y="7" width="1" height="1" fill="#30d030"/><rect x="5" y="7" width="1" height="1" fill="#70f070"/><rect x="6" y="7" width="1" height="1" fill="#30d030"/><rect x="7" y="7" width="1" height="1" fill="#70f070"/><rect x="8" y="7" width="1" height="1" fill="#30d030"/><rect x="9" y="7" width="1" height="1" fill="#70f070"/><rect x="10" y="7" width="1" height="1" fill="#30d030"/><rect x="11" y="7" width="1" height="1" fill="#70f070"/><rect x="12" y="7" width="1" height="1" fill="#30d030"/><rect x="13" y="7" width="2" height="1" fill="#102810"/><rect x="0" y="8" width="1" height="1" fill="#206020"/><rect x="1" y="8" width="1" height="1" fill="#70f070"/><rect x="2" y="8" width="2" height="1" fill="#30d030"/><rect x="4" y="8" width="1" height="1" fill="#70f070"/><rect x="5" y="8" width="1" height="1" fill="#30d030"/><rect x="6" y="8" width="1" height="1" fill="#70f070"/><rect x="7" y="8" width="1" height="1" fill="#30d030"/><rect x="8" y="8" width="1" height="1" fill="#70f070"/><rect x="9" y="8" width="1" height="1" fill="#30d030"/><rect x="10" y="8" width="1" height="1" fill="#70f070"/><rect x="11" y="8" width="2" height="1" fill="#30d030"/><rect x="13" y="8" width="2" height="1" fill="#102810"/><rect x="0" y="9" width="1" height="1" fill="#206020"/><rect x="1" y="9" width="1" height="1" fill="#70f070"/><rect x="2" y="9" width="1" height="1" fill="#30d030"/><rect x="3" y="9" width="1" height="1" fill="#70f070"/><rect x="4" y="9" width="1" height="1" fill="#30d030"/><rect x="5" y="9" width="1" height="1" fill="#70f070"/><rect x="6" y="9" width="1" height="1" fill="#30d030"/><rect x="7" y="9" width="1" height="1" fill="#70f070"/><rect x="8" y="9" width="1" height="1" fill="#30d030"/><rect x="9" y="9" width="1" height="1" fill="#70f070"/><rect x="10" y="9" width="1" height="1" fill="#30d030"/><rect x="11" y="9" width="1" height="1" fill="#70f070"/><rect x="12" y="9" width="1" height="1" fill="#30d030"/><rect x="13" y="9" width="2" height="1" fill="#102810"/><rect x="0" y="10" width="1" height="1" fill="#206020"/><rect x="1" y="10" width="1" height="1" fill="#70f070"/><rect x="2" y="10" width="11" height="1" fill="#30d030"/><rect x="13" y="10" width="2" height="1" fill="#102810"/><rect x="0" y="11" width="1" height="1" fill="#206020"/><rect x="1" y="11" width="14" height="1" fill="#102810"/><rect x="1" y="12" width="14" height="1" fill="#102810"/></svg><svg style="position:absolute;left:45px;top:134px" width="15" height="13" viewBox="0 0 15 13" shape-rendering="crispEdges"><rect x="1" y="0" width="5" height="1" fill="#206020"/><rect x="0" y="1" width="1" height="1" fill="#206020"/><rect x="1" y="1" width="1" height="1" fill="#30d030"/><rect x="2" y="1" width="1" height="1" fill="#70f070"/><rect x="3" y="1" width="1" height="1" fill="#30d030"/><rect x="4" y="1" width="1" height="1" fill="#70f070"/><rect x="5" y="1" width="1" height="1" fill="#30d030"/><rect x="6" y="1" width="1" height="1" fill="#206020"/><rect x="0" y="2" width="1" height="1" fill="#206020"/><rect x="1" y="2" width="1" height="1" fill="#70f070"/><rect x="2" y="2" width="1" height="1" fill="#30d030"/><rect x="3" y="2" width="1" height="1" fill="#70f070"/><rect x="4" y="2" width="1" height="1" fill="#30d030"/><rect x="5" y="2" width="1" height="1" fill="#70f070"/><rect x="6" y="2" width="1" height="1" fill="#30d030"/><rect x="7" y="2" width="6" height="1" fill="#206020"/><rect x="13" y="2" width="1" height="1" fill="#102810"/><rect x="0" y="3" width="1" height="1" fill="#206020"/><rect x="1" y="3" width="1" height="1" fill="#30d030"/><rect x="2" y="3" width="10" height="1" fill="#70f070"/><rect x="12" y="3" width="1" height="1" fill="#30d030"/><rect x="13" y="3" width="2" height="1" fill="#102810"/><rect x="0" y="4" width="1" height="1" fill="#206020"/><rect x="1" y="4" width="1" height="1" fill="#70f070"/><rect x="2" y="4" width="2" height="1" fill="#30d030"/><rect x="4" y="4" width="1" height="1" fill="#70f070"/><rect x="5" y="4" width="1" height="1" fill="#30d030"/><rect x="6" y="4" width="1" height="1" fill="#70f070"/><rect x="7" y="4" width="1" height="1" fill="#30d030"/><rect x="8" y="4" width="1" height="1" fill="#70f070"/><rect x="9" y="4" width="1" height="1" fill="#30d030"/><rect x="10" y="4" width="1" height="1" fill="#70f070"/><rect x="11" y="4" width="2" height="1" fill="#30d030"/><rect x="13" y="4" width="2" height="1" fill="#102810"/><rect x="0" y="5" width="1" height="1" fill="#206020"/><rect x="1" y="5" width="1" height="1" fill="#70f070"/><rect x="2" y="5" width="1" height="1" fill="#30d030"/><rect x="3" y="5" width="1" height="1" fill="#70f070"/><rect x="4" y="5" width="1" height="1" fill="#30d030"/><rect x="5" y="5" width="1" height="1" fill="#70f070"/><rect x="6" y="5" width="1" height="1" fill="#30d030"/><rect x="7" y="5" width="1" height="1" fill="#70f070"/><rect x="8" y="5" width="1" height="1" fill="#30d030"/><rect x="9" y="5" width="1" height="1" fill="#70f070"/><rect x="10" y="5" width="1" height="1" fill="#30d030"/><rect x="11" y="5" width="1" height="1" fill="#70f070"/><rect x="12" y="5" width="1" height="1" fill="#30d030"/><rect x="13" y="5" width="2" height="1" fill="#102810"/><rect x="0" y="6" width="1" height="1" fill="#206020"/><rect x="1" y="6" width="1" height="1" fill="#70f070"/><rect x="2" y="6" width="2" height="1" fill="#30d030"/><rect x="4" y="6" width="1" height="1" fill="#70f070"/><rect x="5" y="6" width="1" height="1" fill="#30d030"/><rect x="6" y="6" width="1" height="1" fill="#70f070"/><rect x="7" y="6" width="1" height="1" fill="#30d030"/><rect x="8" y="6" width="1" height="1" fill="#70f070"/><rect x="9" y="6" width="1" height="1" fill="#30d030"/><rect x="10" y="6" width="1" height="1" fill="#70f070"/><rect x="11" y="6" width="2" height="1" fill="#30d030"/><rect x="13" y="6" width="2" height="1" fill="#102810"/><rect x="0" y="7" width="1" height="1" fill="#206020"/><rect x="1" y="7" width="1" height="1" fill="#70f070"/><rect x="2" y="7" width="1" height="1" fill="#30d030"/><rect x="3" y="7" width="1" height="1" fill="#70f070"/><rect x="4" y="7" width="1" height="1" fill="#30d030"/><rect x="5" y="7" width="1" height="1" fill="#70f070"/><rect x="6" y="7" width="1" height="1" fill="#30d030"/><rect x="7" y="7" width="1" height="1" fill="#70f070"/><rect x="8" y="7" width="1" height="1" fill="#30d030"/><rect x="9" y="7" width="1" height="1" fill="#70f070"/><rect x="10" y="7" width="1" height="1" fill="#30d030"/><rect x="11" y="7" width="1" height="1" fill="#70f070"/><rect x="12" y="7" width="1" height="1" fill="#30d030"/><rect x="13" y="7" width="2" height="1" fill="#102810"/><rect x="0" y="8" width="1" height="1" fill="#206020"/><rect x="1" y="8" width="1" height="1" fill="#70f070"/><rect x="2" y="8" width="2" height="1" fill="#30d030"/><rect x="4" y="8" width="1" height="1" fill="#70f070"/><rect x="5" y="8" width="1" height="1" fill="#30d030"/><rect x="6" y="8" width="1" height="1" fill="#70f070"/><rect x="7" y="8" width="1" height="1" fill="#30d030"/><rect x="8" y="8" width="1" height="1" fill="#70f070"/><rect x="9" y="8" width="1" height="1" fill="#30d030"/><rect x="10" y="8" width="1" height="1" fill="#70f070"/><rect x="11" y="8" width="2" height="1" fill="#30d030"/><rect x="13" y="8" width="2" height="1" fill="#102810"/><rect x="0" y="9" width="1" height="1" fill="#206020"/><rect x="1" y="9" width="1" height="1" fill="#70f070"/><rect x="2" y="9" width="1" height="1" fill="#30d030"/><rect x="3" y="9" width="1" height="1" fill="#70f070"/><rect x="4" y="9" width="1" height="1" fill="#30d030"/><rect x="5" y="9" width="1" height="1" fill="#70f070"/><rect x="6" y="9" width="1" height="1" fill="#30d030"/><rect x="7" y="9" width="1" height="1" fill="#70f070"/><rect x="8" y="9" width="1" height="1" fill="#30d030"/><rect x="9" y="9" width="1" height="1" fill="#70f070"/><rect x="10" y="9" width="1" height="1" fill="#30d030"/><rect x="11" y="9" width="1" height="1" fill="#70f070"/><rect x="12" y="9" width="1" height="1" fill="#30d030"/><rect x="13" y="9" width="2" height="1" fill="#102810"/><rect x="0" y="10" width="1" height="1" fill="#206020"/><rect x="1" y="10" width="1" height="1" fill="#70f070"/><rect x="2" y="10" width="11" height="1" fill="#30d030"/><rect x="13" y="10" width="2" height="1" fill="#102810"/><rect x="0" y="11" width="1" height="1" fill="#206020"/><rect x="1" y="11" width="14" height="1" fill="#102810"/><rect x="1" y="12" width="14" height="1" fill="#102810"/></svg><svg style="position:absolute;left:44px;top:118px" width="16" height="13" viewBox="0 0 16 13" shape-rendering="crispEdges"><rect x="2" y="0" width="5" height="1" fill="#206020"/><rect x="1" y="1" width="1" height="1" fill="#206020"/><rect x="2" y="1" width="1" height="1" fill="#30d030"/><rect x="3" y="1" width="1" height="1" fill="#70f070"/><rect x="4" y="1" width="1" height="1" fill="#30d030"/><rect x="5" y="1" width="1" height="1" fill="#70f070"/><rect x="6" y="1" width="1" height="1" fill="#30d030"/><rect x="7" y="1" width="1" height="1" fill="#206020"/><rect x="1" y="2" width="1" height="1" fill="#206020"/><rect x="2" y="2" width="1" height="1" fill="#70f070"/><rect x="3" y="2" width="1" height="1" fill="#30d030"/><rect x="4" y="2" width="1" height="1" fill="#70f070"/><rect x="5" y="2" width="1" height="1" fill="#30d030"/><rect x="6" y="2" width="1" height="1" fill="#70f070"/><rect x="7" y="2" width="1" height="1" fill="#30d030"/><rect x="8" y="2" width="5" height="1" fill="#206020"/><rect x="13" y="2" width="1" height="1" fill="#102810"/><rect x="1" y="3" width="1" height="1" fill="#206020"/><rect x="2" y="3" width="1" height="1" fill="#30d030"/><rect x="3" y="3" width="9" height="1" fill="#70f070"/><rect x="12" y="3" width="1" height="1" fill="#30d030"/><rect x="13" y="3" width="1" height="1" fill="#102810"/><rect x="0" y="4" width="12" height="1" fill="#206020"/><rect x="12" y="4" width="1" height="1" fill="#70f070"/><rect x="13" y="4" width="2" height="1" fill="#102810"/><rect x="0" y="5" width="1" height="1" fill="#206020"/><rect x="1" y="5" width="1" height="1" fill="#70f070"/><rect x="2" y="5" width="1" height="1" fill="#30d030"/><rect x="3" y="5" width="1" height="1" fill="#70f070"/><rect x="4" y="5" width="1" height="1" fill="#30d030"/><rect x="5" y="5" width="1" height="1" fill="#70f070"/><rect x="6" y="5" width="1" height="1" fill="#30d030"/><rect x="7" y="5" width="1" height="1" fill="#70f070"/><rect x="8" y="5" width="1" height="1" fill="#30d030"/><rect x="9" y="5" width="1" height="1" fill="#70f070"/><rect x="10" y="5" width="1" height="1" fill="#30d030"/><rect x="11" y="5" width="1" height="1" fill="#70f070"/><rect x="12" y="5" width="1" height="1" fill="#206020"/><rect x="13" y="5" width="2" height="1" fill="#102810"/><rect x="1" y="6" width="1" height="1" fill="#206020"/><rect x="2" y="6" width="1" height="1" fill="#70f070"/><rect x="3" y="6" width="1" height="1" fill="#30d030"/><rect x="4" y="6" width="1" height="1" fill="#70f070"/><rect x="5" y="6" width="1" height="1" fill="#30d030"/><rect x="6" y="6" width="1" height="1" fill="#70f070"/><rect x="7" y="6" width="1" height="1" fill="#30d030"/><rect x="8" y="6" width="1" height="1" fill="#70f070"/><rect x="9" y="6" width="1" height="1" fill="#30d030"/><rect x="10" y="6" width="1" height="1" fill="#70f070"/><rect x="11" y="6" width="1" height="1" fill="#30d030"/><rect x="12" y="6" width="1" height="1" fill="#206020"/><rect x="13" y="6" width="2" height="1" fill="#102810"/><rect x="1" y="7" width="1" height="1" fill="#206020"/><rect x="2" y="7" width="1" height="1" fill="#30d030"/><rect x="3" y="7" width="1" height="1" fill="#70f070"/><rect x="4" y="7" width="1" height="1" fill="#30d030"/><rect x="5" y="7" width="1" height="1" fill="#70f070"/><rect x="6" y="7" width="1" height="1" fill="#30d030"/><rect x="7" y="7" width="1" height="1" fill="#70f070"/><rect x="8" y="7" width="1" height="1" fill="#30d030"/><rect x="9" y="7" width="1" height="1" fill="#70f070"/><rect x="10" y="7" width="1" height="1" fill="#30d030"/><rect x="11" y="7" width="1" height="1" fill="#70f070"/><rect x="12" y="7" width="1" height="1" fill="#30d030"/><rect x="13" y="7" width="1" height="1" fill="#206020"/><rect x="14" y="7" width="1" height="1" fill="#102810"/><rect x="2" y="8" width="1" height="1" fill="#206020"/><rect x="3" y="8" width="1" height="1" fill="#30d030"/><rect x="4" y="8" width="1" height="1" fill="#70f070"/><rect x="5" y="8" width="1" height="1" fill="#30d030"/><rect x="6" y="8" width="1" height="1" fill="#70f070"/><rect x="7" y="8" width="1" height="1" fill="#30d030"/><rect x="8" y="8" width="1" height="1" fill="#70f070"/><rect x="9" y="8" width="1" height="1" fill="#30d030"/><rect x="10" y="8" width="1" height="1" fill="#70f070"/><rect x="11" y="8" width="1" height="1" fill="#30d030"/><rect x="12" y="8" width="1" height="1" fill="#70f070"/><rect x="13" y="8" width="1" height="1" fill="#206020"/><rect x="14" y="8" width="1" height="1" fill="#102810"/><rect x="2" y="9" width="1" height="1" fill="#206020"/><rect x="3" y="9" width="1" height="1" fill="#70f070"/><rect x="4" y="9" width="1" height="1" fill="#30d030"/><rect x="5" y="9" width="1" height="1" fill="#70f070"/><rect x="6" y="9" width="1" height="1" fill="#30d030"/><rect x="7" y="9" width="1" height="1" fill="#70f070"/><rect x="8" y="9" width="1" height="1" fill="#30d030"/><rect x="9" y="9" width="1" height="1" fill="#70f070"/><rect x="10" y="9" width="1" height="1" fill="#30d030"/><rect x="11" y="9" width="1" height="1" fill="#70f070"/><rect x="12" y="9" width="1" height="1" fill="#30d030"/><rect x="13" y="9" width="1" height="1" fill="#70f070"/><rect x="14" y="9" width="1" height="1" fill="#206020"/><rect x="3" y="10" width="1" height="1" fill="#206020"/><rect x="4" y="10" width="11" height="1" fill="#102810"/><rect x="4" y="11" width="11" height="1" fill="#102810"/></svg><svg style="position:absolute;left:248px;top:91px" width="14" height="10" viewBox="0 0 14 10" shape-rendering="crispEdges"><rect x="3" y="0" width="10" height="1" fill="#185818"/><rect x="2" y="1" width="1" height="1" fill="#185818"/><rect x="3" y="1" width="9" height="1" fill="#a0f0a0"/><rect x="12" y="1" width="1" height="1" fill="#48d848"/><rect x="13" y="1" width="1" height="1" fill="#185818"/><rect x="1" y="2" width="1" height="1" fill="#185818"/><rect x="2" y="2" width="1" height="1" fill="#a0f0a0"/><rect x="3" y="2" width="1" height="1" fill="#48d848"/><rect x="4" y="2" width="1" height="1" fill="#a0f0a0"/><rect x="5" y="2" width="1" height="1" fill="#48d848"/><rect x="6" y="2" width="1" height="1" fill="#a0f0a0"/><rect x="7" y="2" width="1" height="1" fill="#48d848"/><rect x="8" y="2" width="1" height="1" fill="#a0f0a0"/><rect x="9" y="2" width="1" height="1" fill="#48d848"/><rect x="10" y="2" width="1" height="1" fill="#a0f0a0"/><rect x="11" y="2" width="2" height="1" fill="#48d848"/><rect x="13" y="2" width="1" height="1" fill="#185818"/><rect x="0" y="3" width="1" height="1" fill="#185818"/><rect x="1" y="3" width="1" height="1" fill="#a0f0a0"/><rect x="2" y="3" width="2" height="1" fill="#48d848"/><rect x="4" y="3" width="1" height="1" fill="#a0f0a0"/><rect x="5" y="3" width="1" height="1" fill="#48d848"/><rect x="6" y="3" width="1" height="1" fill="#a0f0a0"/><rect x="7" y="3" width="1" height="1" fill="#48d848"/><rect x="8" y="3" width="1" height="1" fill="#a0f0a0"/><rect x="9" y="3" width="1" height="1" fill="#48d848"/><rect x="10" y="3" width="1" height="1" fill="#a0f0a0"/><rect x="11" y="3" width="2" height="1" fill="#48d848"/><rect x="13" y="3" width="1" height="1" fill="#185818"/><rect x="0" y="4" width="1" height="1" fill="#185818"/><rect x="1" y="4" width="1" height="1" fill="#a0f0a0"/><rect x="2" y="4" width="1" height="1" fill="#48d848"/><rect x="3" y="4" width="1" height="1" fill="#a0f0a0"/><rect x="4" y="4" width="1" height="1" fill="#48d848"/><rect x="5" y="4" width="1" height="1" fill="#a0f0a0"/><rect x="6" y="4" width="1" height="1" fill="#48d848"/><rect x="7" y="4" width="1" height="1" fill="#a0f0a0"/><rect x="8" y="4" width="1" height="1" fill="#48d848"/><rect x="9" y="4" width="1" height="1" fill="#a0f0a0"/><rect x="10" y="4" width="1" height="1" fill="#48d848"/><rect x="11" y="4" width="1" height="1" fill="#a0f0a0"/><rect x="12" y="4" width="1" height="1" fill="#48d848"/><rect x="13" y="4" width="1" height="1" fill="#185818"/><rect x="0" y="5" width="1" height="1" fill="#185818"/><rect x="1" y="5" width="1" height="1" fill="#a0f0a0"/><rect x="2" y="5" width="2" height="1" fill="#48d848"/><rect x="4" y="5" width="1" height="1" fill="#a0f0a0"/><rect x="5" y="5" width="1" height="1" fill="#48d848"/><rect x="6" y="5" width="1" height="1" fill="#a0f0a0"/><rect x="7" y="5" width="1" height="1" fill="#48d848"/><rect x="8" y="5" width="1" height="1" fill="#a0f0a0"/><rect x="9" y="5" width="1" height="1" fill="#48d848"/><rect x="10" y="5" width="1" height="1" fill="#a0f0a0"/><rect x="11" y="5" width="2" height="1" fill="#48d848"/><rect x="13" y="5" width="1" height="1" fill="#185818"/><rect x="0" y="6" width="1" height="1" fill="#185818"/><rect x="1" y="6" width="1" height="1" fill="#a0f0a0"/><rect x="2" y="6" width="1" height="1" fill="#48d848"/><rect x="3" y="6" width="1" height="1" fill="#a0f0a0"/><rect x="4" y="6" width="1" height="1" fill="#48d848"/><rect x="5" y="6" width="1" height="1" fill="#a0f0a0"/><rect x="6" y="6" width="1" height="1" fill="#48d848"/><rect x="7" y="6" width="1" height="1" fill="#a0f0a0"/><rect x="8" y="6" width="1" height="1" fill="#48d848"/><rect x="9" y="6" width="1" height="1" fill="#a0f0a0"/><rect x="10" y="6" width="1" height="1" fill="#48d848"/><rect x="11" y="6" width="1" height="1" fill="#a0f0a0"/><rect x="12" y="6" width="1" height="1" fill="#48d848"/><rect x="13" y="6" width="1" height="1" fill="#185818"/><rect x="1" y="7" width="1" height="1" fill="#185818"/><rect x="2" y="7" width="1" height="1" fill="#a0f0a0"/><rect x="3" y="7" width="1" height="1" fill="#48d848"/><rect x="4" y="7" width="1" height="1" fill="#a0f0a0"/><rect x="5" y="7" width="1" height="1" fill="#48d848"/><rect x="6" y="7" width="1" height="1" fill="#a0f0a0"/><rect x="7" y="7" width="1" height="1" fill="#48d848"/><rect x="8" y="7" width="1" height="1" fill="#a0f0a0"/><rect x="9" y="7" width="1" height="1" fill="#48d848"/><rect x="10" y="7" width="1" height="1" fill="#a0f0a0"/><rect x="11" y="7" width="2" height="1" fill="#48d848"/><rect x="13" y="7" width="1" height="1" fill="#185818"/><rect x="2" y="8" width="1" height="1" fill="#185818"/><rect x="3" y="8" width="10" height="1" fill="#48d848"/><rect x="13" y="8" width="1" height="1" fill="#185818"/><rect x="3" y="9" width="10" height="1" fill="#185818"/></svg><svg style="position:absolute;left:8px;top:355px" width="16" height="16" viewBox="0 0 16 16"><circle cx="8" cy="8" r="6.4" fill="#1818c8" stroke="#000060" stroke-width="1"/><circle cx="8" cy="4.3" r="1.15" fill="#fff"/><path d="M6.3 6.2 H9 V10.8 H10 V11.8 H6.2 V10.8 H7.2 V7.2 H6.3 Z" fill="#fff"/></svg><svg style="position:absolute;left:8px;top:372px" width="16" height="16" viewBox="0 0 16 16"><circle cx="8" cy="8" r="6.4" fill="#1818c8" stroke="#000060" stroke-width="1"/><circle cx="8" cy="4.3" r="1.15" fill="#fff"/><path d="M6.3 6.2 H9 V10.8 H10 V11.8 H6.2 V10.8 H7.2 V7.2 H6.3 Z" fill="#fff"/></svg><svg style="position:absolute;left:8px;top:389px" width="16" height="16" viewBox="0 0 16 16"><circle cx="8" cy="8" r="6.4" fill="#1818c8" stroke="#000060" stroke-width="1"/><circle cx="8" cy="4.3" r="1.15" fill="#fff"/><path d="M6.3 6.2 H9 V10.8 H10 V11.8 H6.2 V10.8 H7.2 V7.2 H6.3 Z" fill="#fff"/></svg><svg style="position:absolute;left:8px;top:406px" width="16" height="16" viewBox="0 0 16 16"><circle cx="8" cy="8" r="6.4" fill="#1818c8" stroke="#000060" stroke-width="1"/><circle cx="8" cy="4.3" r="1.15" fill="#fff"/><path d="M6.3 6.2 H9 V10.8 H10 V11.8 H6.2 V10.8 H7.2 V7.2 H6.3 Z" fill="#fff"/></svg><svg style="position:absolute;left:8px;top:423px" width="16" height="16" viewBox="0 0 16 16"><circle cx="8" cy="8" r="6.4" fill="#1818c8" stroke="#000060" stroke-width="1"/><circle cx="8" cy="4.3" r="1.15" fill="#fff"/><path d="M6.3 6.2 H9 V10.8 H10 V11.8 H6.2 V10.8 H7.2 V7.2 H6.3 Z" fill="#fff"/></svg><svg style="position:absolute;left:8px;top:440px" width="16" height="16" viewBox="0 0 16 16"><circle cx="8" cy="8" r="6.4" fill="#1818c8" stroke="#000060" stroke-width="1"/><circle cx="8" cy="4.3" r="1.15" fill="#fff"/><path d="M6.3 6.2 H9 V10.8 H10 V11.8 H6.2 V10.8 H7.2 V7.2 H6.3 Z" fill="#fff"/></svg><svg style="position:absolute;left:8px;top:457px" width="16" height="16" viewBox="0 0 16 16"><circle cx="8" cy="8" r="6.4" fill="#1818c8" stroke="#000060" stroke-width="1"/><circle cx="8" cy="4.3" r="1.15" fill="#fff"/><path d="M6.3 6.2 H9 V10.8 H10 V11.8 H6.2 V10.8 H7.2 V7.2 H6.3 Z" fill="#fff"/></svg><svg style="position:absolute;left:8px;top:474px" width="16" height="16" viewBox="0 0 16 16"><circle cx="8" cy="8" r="6.4" fill="#1818c8" stroke="#000060" stroke-width="1"/><circle cx="8" cy="4.3" r="1.15" fill="#fff"/><path d="M6.3 6.2 H9 V10.8 H10 V11.8 H6.2 V10.8 H7.2 V7.2 H6.3 Z" fill="#fff"/></svg><svg style="position:absolute;left:8px;top:491px" width="16" height="16" viewBox="0 0 16 16"><circle cx="8" cy="8" r="6.4" fill="#1818c8" stroke="#000060" stroke-width="1"/><circle cx="8" cy="4.3" r="1.15" fill="#fff"/><path d="M6.3 6.2 H9 V10.8 H10 V11.8 H6.2 V10.8 H7.2 V7.2 H6.3 Z" fill="#fff"/></svg><svg style="position:absolute;left:8px;top:657px" width="16" height="16" viewBox="0 0 16 16"><circle cx="8" cy="8" r="6.4" fill="#f4f490" stroke="#000" stroke-width="1"/><rect x="7" y="3.2" width="2" height="6.4" fill="#000"/><rect x="7" y="10.5" width="2" height="2" fill="#000"/></svg><svg style="position:absolute;left:8px;top:674px" width="16" height="16" viewBox="0 0 16 16"><circle cx="8" cy="8" r="6.4" fill="#f4f490" stroke="#000" stroke-width="1"/><rect x="7" y="3.2" width="2" height="6.4" fill="#000"/><rect x="7" y="10.5" width="2" height="2" fill="#000"/></svg><svg style="position:absolute;left:8px;top:691px" width="16" height="16" viewBox="0 0 16 16"><circle cx="8" cy="8" r="6.4" fill="#f4f490" stroke="#000" stroke-width="1"/><rect x="7" y="3.2" width="2" height="6.4" fill="#000"/><rect x="7" y="10.5" width="2" height="2" fill="#000"/></svg><svg style="position:absolute;left:8px;top:708px" width="16" height="16" viewBox="0 0 16 16"><circle cx="8" cy="8" r="6.4" fill="#f4f490" stroke="#000" stroke-width="1"/><rect x="7" y="3.2" width="2" height="6.4" fill="#000"/><rect x="7" y="10.5" width="2" height="2" fill="#000"/></svg><svg style="position:absolute;left:8px;top:725px" width="16" height="16" viewBox="0 0 16 16"><circle cx="8" cy="8" r="6.4" fill="#1818c8" stroke="#000060" stroke-width="1"/><circle cx="8" cy="4.3" r="1.15" fill="#fff"/><path d="M6.3 6.2 H9 V10.8 H10 V11.8 H6.2 V10.8 H7.2 V7.2 H6.3 Z" fill="#fff"/></svg><svg style="position:absolute;left:8px;top:742px" width="16" height="16" viewBox="0 0 16 16"><circle cx="8" cy="8" r="6.4" fill="#1818c8" stroke="#000060" stroke-width="1"/><circle cx="8" cy="4.3" r="1.15" fill="#fff"/><path d="M6.3 6.2 H9 V10.8 H10 V11.8 H6.2 V10.8 H7.2 V7.2 H6.3 Z" fill="#fff"/></svg><svg style="position:absolute;left:756px;top:103px" width="13" height="22" viewBox="0 0 13 22"><path d="M0.5 0.5 L0.5 16.5 L4 13 L7 20 L9.5 19 L6.5 12 L11.5 12 Z" fill="#fff" stroke="#000" stroke-width="1" stroke-linejoin="miter"/></svg>
<div style="position:absolute;left:0;top:0;width:800px;height:786px;will-change:transform">
<div class="t" style="left:23.40px;top:6.02px;font-size:11.5px;color:#fff;transform:scaleX(1.0041);font-weight:bold;">OPC Quick Client - Untitled *</div>
<div class="t" style="left:8.56px;top:24.62px;font-size:11.5px;color:#000;transform:scaleX(0.9412);">File</div>
<div class="t" style="left:36.57px;top:24.62px;font-size:11.5px;color:#000;transform:scaleX(0.9347);">Edit</div>
<div class="t" style="left:67.46px;top:24.62px;font-size:11.5px;color:#000;transform:scaleX(0.8732);">View</div>
<div class="t" style="left:101.89px;top:24.62px;font-size:11.5px;color:#000;transform:scaleX(0.9372);">Tools</div>
<div class="t" style="left:137.84px;top:24.62px;font-size:11.5px;color:#000;transform:scaleX(0.9091);">Help</div>
<div class="t" style="left:44.90px;top:69.62px;font-size:11.5px;color:#000;transform:scaleX(0.9011);">KEPware.KEPServerEx.V4</div>
<div class="t" style="left:64.61px;top:85.62px;font-size:11.5px;color:#000;transform:scaleX(0.9322);">Channel1._Statistics</div>
<div class="t" style="left:64.61px;top:101.62px;font-size:11.5px;color:#000;transform:scaleX(0.9300);">Channel1._System</div>
<div class="t" style="left:65.65px;top:117.62px;font-size:11.5px;color:#fff;transform:scaleX(0.9893);font-weight:bold;">Channel1.Device1</div>
<div class="t" style="left:64.61px;top:133.62px;font-size:11.5px;color:#000;transform:scaleX(0.9318);">Channel1.Device1._System</div>
<div class="t" style="left:251.04px;top:71.02px;font-size:11.5px;color:#000;transform:scaleX(0.9609);">Item ID</div>
<div class="t" style="left:370.78px;top:71.02px;font-size:11.5px;color:#000;transform:scaleX(0.9740);">Data Type</div>
<div class="t" style="left:491.71px;top:71.02px;font-size:11.5px;color:#000;transform:scaleX(0.9211);">Value</div>
<div class="t" style="left:611.64px;top:71.02px;font-size:11.5px;color:#000;transform:scaleX(0.8998);">Timestamp</div>
<div class="t" style="left:731.14px;top:71.02px;font-size:11.5px;color:#000;transform:scaleX(0.9459);">Quality</div>
<div class="t" style="left:263.35px;top:89.77px;font-size:11.5px;color:#000;transform:scaleX(0.9542);">Channel1.Device1...</div>
<div class="t" style="left:371.73px;top:89.77px;font-size:11.5px;color:#000;transform:scaleX(0.9396);">Word</div>
<div class="t" style="left:491.68px;top:89.77px;font-size:11.5px;color:#000;transform:scaleX(1.0000);">0</div>
<div class="t" style="left:611.43px;top:89.77px;font-size:11.5px;color:#000;transform:scaleX(0.9898);">09:20:28:906</div>
<div class="t" style="left:731.53px;top:89.77px;font-size:11.5px;color:#000;transform:scaleX(0.8965);">Good</div>
<div class="t" style="left:11.04px;top:339.52px;font-size:11.5px;color:#000;transform:scaleX(0.9565);">Date</div>
<div class="t" style="left:132.40px;top:339.52px;font-size:11.5px;color:#000;transform:scaleX(0.8298);">Time</div>
<div class="t" style="left:251.04px;top:339.52px;font-size:11.5px;color:#000;transform:scaleX(0.9564);">Event</div>
<div class="t" style="left:25.31px;top:356.52px;font-size:11.5px;color:#000;transform:scaleX(0.9704);">6/14/2002</div>
<div class="t" style="left:134.61px;top:356.52px;font-size:11.5px;color:#000;transform:scaleX(0.9738);">9:20:28 AM</div>
<div class="t" style="left:251.59px;top:356.52px;font-size:11.5px;color:#000;transform:scaleX(0.9872);">Connected to serve...</div>
<div class="t" style="left:25.31px;top:373.52px;font-size:11.5px;color:#000;transform:scaleX(0.9704);">6/14/2002</div>
<div class="t" style="left:134.61px;top:373.52px;font-size:11.5px;color:#000;transform:scaleX(0.9738);">9:20:28 AM</div>
<div class="t" style="left:251.91px;top:373.52px;font-size:11.5px;color:#000;transform:scaleX(0.9581);">Added group 'Chan...</div>
<div class="t" style="left:25.31px;top:390.52px;font-size:11.5px;color:#000;transform:scaleX(0.9704);">6/14/2002</div>
<div class="t" style="left:134.61px;top:390.52px;font-size:11.5px;color:#000;transform:scaleX(0.9738);">9:20:28 AM</div>
<div class="t" style="left:251.91px;top:390.52px;font-size:11.5px;color:#000;transform:scaleX(0.9581);">Added group 'Chan...</div>
<div class="t" style="left:25.31px;top:407.52px;font-size:11.5px;color:#000;transform:scaleX(0.9704);">6/14/2002</div>
<div class="t" style="left:134.61px;top:407.52px;font-size:11.5px;color:#000;transform:scaleX(0.9738);">9:20:28 AM</div>
<div class="t" style="left:251.90px;top:407.52px;font-size:11.5px;color:#000;transform:scaleX(0.9768);">Added 7 items to gr...</div>
<div class="t" style="left:25.31px;top:424.52px;font-size:11.5px;color:#000;transform:scaleX(0.9704);">6/14/2002</div>
<div class="t" style="left:134.61px;top:424.52px;font-size:11.5px;color:#000;transform:scaleX(0.9738);">9:20:28 AM</div>
<div class="t" style="left:251.91px;top:424.52px;font-size:11.5px;color:#000;transform:scaleX(0.9581);">Added group 'Chan...</div>
<div class="t" style="left:25.31px;top:441.52px;font-size:11.5px;color:#000;transform:scaleX(0.9704);">6/14/2002</div>
<div class="t" style="left:134.61px;top:441.52px;font-size:11.5px;color:#000;transform:scaleX(0.9738);">9:20:28 AM</div>
<div class="t" style="left:251.91px;top:441.52px;font-size:11.5px;color:#000;transform:scaleX(0.9648);">Added 14 items to g...</div>
<div class="t" style="left:25.31px;top:458.52px;font-size:11.5px;color:#000;transform:scaleX(0.9704);">6/14/2002</div>
<div class="t" style="left:134.61px;top:458.52px;font-size:11.5px;color:#000;transform:scaleX(0.9738);">9:20:28 AM</div>
<div class="t" style="left:251.91px;top:458.52px;font-size:11.5px;color:#000;transform:scaleX(0.9581);">Added group 'Chan...</div>
<div class="t" style="left:25.31px;top:475.52px;font-size:11.5px;color:#000;transform:scaleX(0.9704);">6/14/2002</div>
<div class="t" style="left:134.61px;top:475.52px;font-size:11.5px;color:#000;transform:scaleX(0.9738);">9:20:28 AM</div>
<div class="t" style="left:251.91px;top:475.52px;font-size:11.5px;color:#000;transform:scaleX(0.9648);">Added 10 items to g...</div>
<div class="t" style="left:25.31px;top:492.52px;font-size:11.5px;color:#000;transform:scaleX(0.9704);">6/14/2002</div>
<div class="t" style="left:134.61px;top:492.52px;font-size:11.5px;color:#000;transform:scaleX(0.9738);">9:20:28 AM</div>
<div class="t" style="left:251.90px;top:492.52px;font-size:11.5px;color:#000;transform:scaleX(0.9712);">Added 1 items to gr...</div>
<div class="t" style="left:4.64px;top:635.27px;font-size:11.5px;color:#000;transform:scaleX(0.9563);">Ready</div>
<div class="t" style="left:4.64px;top:766.77px;font-size:11.5px;color:#000;transform:scaleX(0.9563);">Ready</div>
<div class="t" style="left:25.31px;top:658.52px;font-size:11.5px;color:#000;transform:scaleX(0.9704);">6/14/2002</div>
<div class="t" style="left:114.66px;top:658.52px;font-size:11.5px;color:#000;transform:scaleX(0.9642);">8:08:39 AM</div>
<div class="t" style="left:210.29px;top:658.52px;font-size:11.5px;color:#000;transform:scaleX(0.9553);">Default User</div>
<div class="t" style="left:310.33px;top:658.52px;font-size:11.5px;color:#000;transform:scaleX(0.9208);">Modbus Serial</div>
<div class="t" style="left:410.77px;top:658.52px;font-size:11.5px;color:#000;transform:scaleX(0.9338);">Device 'modbus.Device1' is not responding.</div>
<div class="t" style="left:25.31px;top:675.52px;font-size:11.5px;color:#000;transform:scaleX(0.9704);">6/14/2002</div>
<div class="t" style="left:114.66px;top:675.52px;font-size:11.5px;color:#000;transform:scaleX(0.9642);">8:32:55 AM</div>
<div class="t" style="left:210.29px;top:675.52px;font-size:11.5px;color:#000;transform:scaleX(0.9553);">Default User</div>
<div class="t" style="left:310.33px;top:675.52px;font-size:11.5px;color:#000;transform:scaleX(0.9208);">Modbus Serial</div>
<div class="t" style="left:410.77px;top:675.52px;font-size:11.5px;color:#000;transform:scaleX(0.9338);">Device 'modbus.Device1' is not responding.</div>
<div class="t" style="left:25.31px;top:692.52px;font-size:11.5px;color:#000;transform:scaleX(0.9704);">6/14/2002</div>
<div class="t" style="left:114.66px;top:692.52px;font-size:11.5px;color:#000;transform:scaleX(0.9642);">8:34:54 AM</div>
<div class="t" style="left:210.29px;top:692.52px;font-size:11.5px;color:#000;transform:scaleX(0.9553);">Default User</div>
<div class="t" style="left:310.33px;top:692.52px;font-size:11.5px;color:#000;transform:scaleX(0.9208);">Modbus Serial</div>
<div class="t" style="left:410.77px;top:692.52px;font-size:11.5px;color:#000;transform:scaleX(0.9338);">Device 'modbus.Device1' is not responding.</div>
<div class="t" style="left:25.31px;top:709.52px;font-size:11.5px;color:#000;transform:scaleX(0.9704);">6/14/2002</div>
<div class="t" style="left:114.66px;top:709.52px;font-size:11.5px;color:#000;transform:scaleX(0.9642);">8:45:30 AM</div>
<div class="t" style="left:210.29px;top:709.52px;font-size:11.5px;color:#000;transform:scaleX(0.9553);">Default User</div>
<div class="t" style="left:310.33px;top:709.52px;font-size:11.5px;color:#000;transform:scaleX(0.9208);">Modbus Serial</div>
<div class="t" style="left:410.77px;top:709.52px;font-size:11.5px;color:#000;transform:scaleX(0.9338);">Device 'modbus.Device1' is not responding.</div>
<div class="t" style="left:25.31px;top:726.52px;font-size:11.5px;color:#000;transform:scaleX(0.9704);">6/14/2002</div>
<div class="t" style="left:114.61px;top:726.52px;font-size:11.5px;color:#000;transform:scaleX(0.9650);">9:16:34 AM</div>
<div class="t" style="left:210.29px;top:726.52px;font-size:11.5px;color:#000;transform:scaleX(0.9553);">Default User</div>
<div class="t" style="left:310.35px;top:726.52px;font-size:11.5px;color:#000;transform:scaleX(0.8961);">KEPServerEx</div>
<div class="t" style="left:410.76px;top:726.52px;font-size:11.5px;color:#000;transform:scaleX(0.9377);">Stopping Modbus Serial device driver.</div>
<div class="t" style="left:25.31px;top:743.52px;font-size:11.5px;color:#000;transform:scaleX(0.9704);">6/14/2002</div>
<div class="t" style="left:114.61px;top:743.52px;font-size:11.5px;color:#000;transform:scaleX(0.9650);">9:18:51 AM</div>
<div class="t" style="left:210.29px;top:743.52px;font-size:11.5px;color:#000;transform:scaleX(0.9553);">Default User</div>
<div class="t" style="left:310.35px;top:743.52px;font-size:11.5px;color:#000;transform:scaleX(0.8961);">KEPServerEx</div>
<div class="t" style="left:410.75px;top:743.52px;font-size:11.5px;color:#000;transform:scaleX(0.9450);">Starting Modbus Serial device driver.</div>
</div>
</body></html>
